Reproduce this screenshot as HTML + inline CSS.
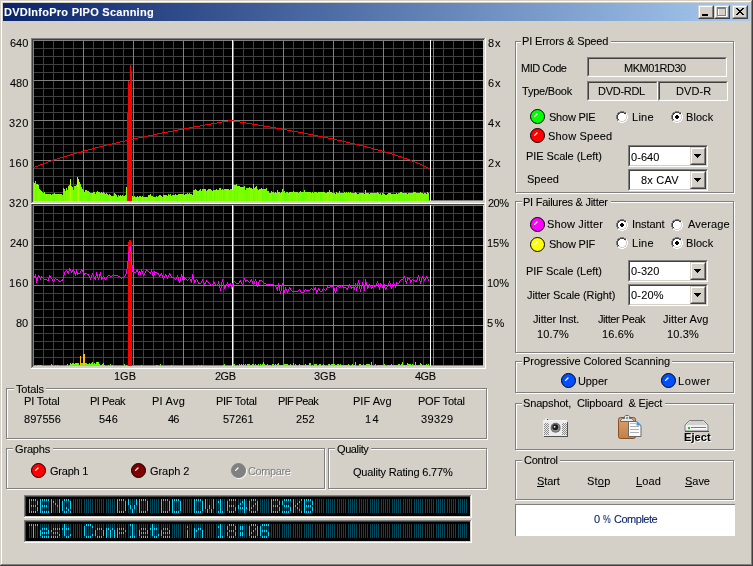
<!DOCTYPE html><html><head><meta charset="utf-8"><style>
html,body{margin:0;padding:0;}
body{width:753px;height:566px;position:relative;overflow:hidden;background:#d4d0c8;font-family:"Liberation Sans",sans-serif;}
.t{position:absolute;white-space:nowrap;will-change:transform;-webkit-text-stroke:0.08px currentColor;font-family:"Liberation Sans",sans-serif;font-size:11px;line-height:13px;}
svg{display:block}
</style></head><body>
<div style="position:absolute;left:0px;top:0px;width:753px;height:566px;background:#d4d0c8;"></div>
<div style="position:absolute;left:1px;top:1px;width:751px;height:1px;background:#fff;"></div>
<div style="position:absolute;left:1px;top:1px;width:1px;height:564px;background:#fff;"></div>
<div style="position:absolute;left:752px;top:0px;width:1px;height:566px;background:#404040;"></div>
<div style="position:absolute;left:0px;top:565px;width:753px;height:1px;background:#404040;"></div>
<div style="position:absolute;left:751px;top:1px;width:1px;height:564px;background:#808080;"></div>
<div style="position:absolute;left:1px;top:564px;width:751px;height:1px;background:#808080;"></div>
<div style="position:absolute;left:3px;top:3px;width:747px;height:18px;background:linear-gradient(to right,#0a246a,#a6caf0)"></div>
<div class="t" style="left:4.00px;top:6.00px;font-weight:bold;font-size:11px;letter-spacing:0.261px;color:#fff;">DVDInfoPro PIPO Scanning</div>
<div style="position:absolute;left:698px;top:5px;width:14px;height:12px;border-style:solid;border-width:1px;border-color:#d4d0c8 #404040 #404040 #d4d0c8;background:#d4d0c8"><div style="position:absolute;left:0;top:0;width:12px;height:10px;border-style:solid;border-width:1px;border-color:#fff #808080 #808080 #fff;"><div style="position:absolute;left:2px;top:7px;width:6px;height:2px;background:#000"></div></div></div>
<div style="position:absolute;left:714px;top:5px;width:14px;height:12px;border-style:solid;border-width:1px;border-color:#d4d0c8 #404040 #404040 #d4d0c8;background:#d4d0c8"><div style="position:absolute;left:0;top:0;width:12px;height:10px;border-style:solid;border-width:1px;border-color:#fff #808080 #808080 #fff;"><svg style="position:absolute;left:1px;top:0px" width="11" height="11" shape-rendering="crispEdges"><path d="M1 1h9v1H1zM1 2h1v8H1zM9 2h1v8H9zM1 9h9v1H1z" fill="#fff"/><path d="M0 0h9v2H0zM0 2h1v7H0zM8 2h1v7H8zM0 8h9v1H0z" fill="#808080"/></svg></div></div>
<div style="position:absolute;left:732px;top:5px;width:14px;height:12px;border-style:solid;border-width:1px;border-color:#d4d0c8 #404040 #404040 #d4d0c8;background:#d4d0c8"><div style="position:absolute;left:0;top:0;width:12px;height:10px;border-style:solid;border-width:1px;border-color:#fff #808080 #808080 #fff;"><svg style="position:absolute;left:2px;top:1px" width="8" height="7" shape-rendering="crispEdges"><path d="M0 0h2v1H0zM6 0h2v1H6zM1 1h2v1H1zM5 1h2v1H5zM2 2h4v1H2zM3 3h2v1H3zM2 4h4v1H2zM1 5h2v1H1zM5 5h2v1H5zM0 6h2v1H0zM6 6h2v1H6z" fill="#000"/></svg></div></div>
<svg style="position:absolute;left:0;top:0" width="753" height="380" shape-rendering="crispEdges"><rect x="31" y="38" width="455" height="166" fill="#d4d0c8"/><rect x="31" y="203" width="455" height="1" fill="#fff"/><rect x="485" y="38" width="1" height="166" fill="#fff"/><rect x="31" y="38" width="454" height="1" fill="#808080"/><rect x="31" y="38" width="1" height="165" fill="#808080"/><rect x="32" y="39" width="452" height="1" fill="#404040"/><rect x="32" y="39" width="1" height="163" fill="#404040"/><rect x="33" y="40" width="450" height="161" fill="#000"/><path d="M43 40h1v161h-1zM53 40h1v161h-1zM63 40h1v161h-1zM73 40h1v161h-1zM93 40h1v161h-1zM103 40h1v161h-1zM113 40h1v161h-1zM123 40h1v161h-1zM143 40h1v161h-1zM153 40h1v161h-1zM163 40h1v161h-1zM173 40h1v161h-1zM193 40h1v161h-1zM203 40h1v161h-1zM213 40h1v161h-1zM223 40h1v161h-1zM243 40h1v161h-1zM253 40h1v161h-1zM263 40h1v161h-1zM273 40h1v161h-1zM293 40h1v161h-1zM303 40h1v161h-1zM313 40h1v161h-1zM323 40h1v161h-1zM343 40h1v161h-1zM353 40h1v161h-1zM363 40h1v161h-1zM373 40h1v161h-1zM393 40h1v161h-1zM403 40h1v161h-1zM413 40h1v161h-1zM423 40h1v161h-1zM443 40h1v161h-1zM453 40h1v161h-1zM463 40h1v161h-1zM473 40h1v161h-1zM33 48h450v1h-450zM33 56h450v1h-450zM33 64h450v1h-450zM33 72h450v1h-450zM33 88h450v1h-450zM33 96h450v1h-450zM33 104h450v1h-450zM33 112h450v1h-450zM33 128h450v1h-450zM33 136h450v1h-450zM33 144h450v1h-450zM33 152h450v1h-450zM33 168h450v1h-450zM33 176h450v1h-450zM33 184h450v1h-450zM33 192h450v1h-450z" fill="#404040"/><path d="M33 40h1v161h-1zM83 40h1v161h-1zM133 40h1v161h-1zM183 40h1v161h-1zM233 40h1v161h-1zM283 40h1v161h-1zM333 40h1v161h-1zM383 40h1v161h-1zM433 40h1v161h-1zM33 40h450v1h-450zM33 80h450v1h-450zM33 120h450v1h-450zM33 160h450v1h-450zM33 200h450v1h-450z" fill="#808080"/><rect x="232" y="40" width="1" height="161" fill="#fff"/><rect x="430" y="40" width="1" height="161" fill="#fff"/><rect x="31" y="204" width="455" height="165" fill="#d4d0c8"/><rect x="31" y="368" width="455" height="1" fill="#fff"/><rect x="485" y="204" width="1" height="165" fill="#fff"/><rect x="31" y="204" width="1" height="164" fill="#808080"/><rect x="32" y="204" width="452" height="1" fill="#404040"/><rect x="32" y="204" width="1" height="163" fill="#404040"/><rect x="33" y="205" width="450" height="161" fill="#000"/><path d="M43 205h1v161h-1zM53 205h1v161h-1zM63 205h1v161h-1zM73 205h1v161h-1zM93 205h1v161h-1zM103 205h1v161h-1zM113 205h1v161h-1zM123 205h1v161h-1zM143 205h1v161h-1zM153 205h1v161h-1zM163 205h1v161h-1zM173 205h1v161h-1zM193 205h1v161h-1zM203 205h1v161h-1zM213 205h1v161h-1zM223 205h1v161h-1zM243 205h1v161h-1zM253 205h1v161h-1zM263 205h1v161h-1zM273 205h1v161h-1zM293 205h1v161h-1zM303 205h1v161h-1zM313 205h1v161h-1zM323 205h1v161h-1zM343 205h1v161h-1zM353 205h1v161h-1zM363 205h1v161h-1zM373 205h1v161h-1zM393 205h1v161h-1zM403 205h1v161h-1zM413 205h1v161h-1zM423 205h1v161h-1zM443 205h1v161h-1zM453 205h1v161h-1zM463 205h1v161h-1zM473 205h1v161h-1zM33 213h450v1h-450zM33 221h450v1h-450zM33 229h450v1h-450zM33 237h450v1h-450zM33 253h450v1h-450zM33 261h450v1h-450zM33 269h450v1h-450zM33 277h450v1h-450zM33 293h450v1h-450zM33 301h450v1h-450zM33 309h450v1h-450zM33 317h450v1h-450zM33 333h450v1h-450zM33 341h450v1h-450zM33 349h450v1h-450zM33 357h450v1h-450z" fill="#404040"/><path d="M33 205h1v161h-1zM83 205h1v161h-1zM133 205h1v161h-1zM183 205h1v161h-1zM233 205h1v161h-1zM283 205h1v161h-1zM333 205h1v161h-1zM383 205h1v161h-1zM433 205h1v161h-1zM33 205h450v1h-450zM33 245h450v1h-450zM33 285h450v1h-450zM33 325h450v1h-450zM33 365h450v1h-450z" fill="#808080"/><rect x="232" y="205" width="1" height="161" fill="#fff"/><rect x="430" y="205" width="1" height="161" fill="#fff"/><path d="M33 182h1v19h-1zM35 181h1v20h-1zM36 184h1v17h-1zM42 192h1v9h-1zM49 194h1v7h-1zM63 188h1v13h-1zM65 191h1v10h-1zM80 184h1v17h-1zM87 191h1v10h-1zM88 191h1v10h-1zM89 192h1v9h-1zM90 193h1v8h-1zM100 193h1v8h-1zM107 194h1v7h-1zM108 195h1v6h-1zM112 196h1v5h-1zM116 195h1v6h-1zM117 197h1v4h-1zM118 195h1v6h-1zM123 196h1v5h-1zM133 197h1v4h-1zM138 197h1v4h-1zM144 197h1v4h-1zM147 197h1v4h-1zM155 197h1v4h-1zM156 196h1v5h-1zM162 197h1v4h-1zM169 195h1v6h-1zM176 195h1v6h-1zM187 193h1v8h-1zM195 189h1v12h-1zM201 191h1v10h-1zM202 189h1v12h-1zM203 189h1v12h-1zM206 191h1v10h-1zM211 190h1v11h-1zM214 190h1v11h-1zM219 188h1v13h-1zM223 190h1v11h-1zM229 190h1v11h-1zM231 189h1v12h-1zM234 185h1v16h-1zM237 186h1v15h-1zM247 188h1v13h-1zM249 187h1v14h-1zM253 184h1v17h-1zM262 189h1v12h-1zM267 191h1v10h-1zM272 192h1v9h-1zM284 191h1v10h-1zM285 193h1v8h-1zM286 192h1v9h-1zM291 192h1v9h-1zM302 192h1v9h-1zM303 192h1v9h-1zM311 193h1v8h-1zM314 192h1v9h-1zM320 192h1v9h-1zM329 190h1v11h-1zM337 193h1v8h-1zM340 193h1v8h-1zM342 193h1v8h-1zM360 193h1v8h-1zM376 193h1v8h-1zM377 192h1v9h-1zM380 193h1v8h-1zM388 193h1v8h-1zM392 194h1v7h-1zM399 193h1v8h-1zM402 193h1v8h-1zM404 193h1v8h-1zM409 193h1v8h-1zM415 192h1v9h-1zM428 193h1v8h-1z" fill="#68ff00"/><path d="M34 183h1v18h-1zM37 184h1v17h-1zM38 185h1v16h-1zM41 191h1v10h-1zM43 193h1v8h-1zM50 194h1v7h-1zM58 194h1v7h-1zM59 194h1v7h-1zM66 188h1v13h-1zM71 186h1v15h-1zM75 186h1v15h-1zM92 193h1v8h-1zM110 195h1v6h-1zM113 196h1v5h-1zM124 196h1v5h-1zM136 197h1v4h-1zM142 196h1v5h-1zM145 197h1v4h-1zM146 197h1v4h-1zM152 196h1v5h-1zM154 197h1v4h-1zM160 195h1v6h-1zM164 195h1v6h-1zM170 194h1v7h-1zM171 196h1v5h-1zM180 194h1v7h-1zM184 195h1v6h-1zM204 189h1v12h-1zM205 189h1v12h-1zM207 190h1v11h-1zM208 189h1v12h-1zM213 190h1v11h-1zM215 190h1v11h-1zM216 189h1v12h-1zM218 190h1v11h-1zM222 189h1v12h-1zM226 189h1v12h-1zM227 189h1v12h-1zM239 186h1v15h-1zM250 188h1v13h-1zM252 189h1v12h-1zM256 186h1v15h-1zM260 189h1v12h-1zM269 193h1v8h-1zM275 192h1v9h-1zM279 192h1v9h-1zM280 193h1v8h-1zM281 192h1v9h-1zM289 192h1v9h-1zM290 192h1v9h-1zM296 192h1v9h-1zM299 192h1v9h-1zM307 192h1v9h-1zM310 192h1v9h-1zM312 192h1v9h-1zM315 192h1v9h-1zM316 192h1v9h-1zM318 192h1v9h-1zM323 192h1v9h-1zM324 192h1v9h-1zM326 193h1v8h-1zM327 192h1v9h-1zM328 192h1v9h-1zM330 192h1v9h-1zM331 192h1v9h-1zM332 193h1v8h-1zM336 192h1v9h-1zM345 193h1v8h-1zM352 193h1v8h-1zM354 193h1v8h-1zM355 192h1v9h-1zM358 194h1v7h-1zM361 193h1v8h-1zM362 193h1v8h-1zM363 193h1v8h-1zM365 190h1v11h-1zM366 193h1v8h-1zM367 193h1v8h-1zM378 193h1v8h-1zM385 195h1v6h-1zM390 193h1v8h-1zM391 194h1v7h-1zM403 193h1v8h-1zM405 193h1v8h-1zM413 192h1v9h-1zM416 193h1v8h-1zM417 193h1v8h-1zM422 193h1v8h-1z" fill="#88ff00"/><path d="M39 189h1v12h-1zM40 190h1v11h-1zM44 192h1v9h-1zM51 195h1v6h-1zM55 194h1v7h-1zM84 192h1v9h-1zM85 190h1v11h-1zM93 192h1v9h-1zM102 193h1v8h-1zM103 192h1v9h-1zM109 194h1v7h-1zM111 196h1v5h-1zM114 193h1v8h-1zM115 194h1v7h-1zM119 196h1v5h-1zM122 195h1v6h-1zM126 187h1v14h-1zM132 196h1v5h-1zM140 196h1v5h-1zM141 197h1v4h-1zM148 195h1v6h-1zM149 195h1v6h-1zM151 196h1v5h-1zM153 197h1v4h-1zM161 196h1v5h-1zM166 195h1v6h-1zM168 194h1v7h-1zM173 195h1v6h-1zM178 194h1v7h-1zM182 194h1v7h-1zM185 194h1v7h-1zM198 191h1v10h-1zM220 188h1v13h-1zM230 189h1v12h-1zM233 184h1v17h-1zM235 185h1v16h-1zM236 184h1v17h-1zM238 186h1v15h-1zM241 187h1v14h-1zM242 187h1v14h-1zM248 188h1v13h-1zM261 188h1v13h-1zM264 189h1v12h-1zM271 191h1v10h-1zM273 192h1v9h-1zM277 190h1v11h-1zM282 189h1v12h-1zM283 192h1v9h-1zM287 192h1v9h-1zM292 192h1v9h-1zM294 192h1v9h-1zM308 192h1v9h-1zM309 192h1v9h-1zM317 193h1v8h-1zM321 192h1v9h-1zM322 192h1v9h-1zM325 193h1v8h-1zM335 194h1v7h-1zM339 191h1v10h-1zM344 192h1v9h-1zM348 192h1v9h-1zM349 193h1v8h-1zM357 194h1v7h-1zM364 194h1v7h-1zM368 193h1v8h-1zM372 193h1v8h-1zM374 193h1v8h-1zM379 194h1v7h-1zM382 193h1v8h-1zM387 194h1v7h-1zM393 194h1v7h-1zM395 194h1v7h-1zM408 193h1v8h-1zM411 193h1v8h-1zM412 193h1v8h-1zM420 192h1v9h-1zM421 193h1v8h-1zM424 193h1v8h-1zM425 193h1v8h-1zM426 194h1v7h-1z" fill="#78ff00"/><path d="M45 194h1v7h-1zM47 194h1v7h-1zM48 194h1v7h-1zM52 194h1v7h-1zM53 194h1v7h-1zM54 193h1v8h-1zM56 194h1v7h-1zM61 194h1v7h-1zM62 195h1v6h-1zM67 190h1v11h-1zM73 190h1v11h-1zM74 186h1v15h-1zM76 185h1v16h-1zM81 187h1v14h-1zM82 189h1v12h-1zM83 190h1v11h-1zM86 190h1v11h-1zM91 193h1v8h-1zM96 192h1v9h-1zM99 192h1v9h-1zM101 192h1v9h-1zM104 193h1v8h-1zM105 194h1v7h-1zM106 193h1v8h-1zM125 195h1v6h-1zM135 197h1v4h-1zM139 196h1v5h-1zM157 197h1v4h-1zM158 196h1v5h-1zM159 195h1v6h-1zM167 196h1v5h-1zM172 195h1v6h-1zM174 195h1v6h-1zM177 195h1v6h-1zM181 194h1v7h-1zM186 194h1v7h-1zM189 193h1v8h-1zM190 194h1v7h-1zM191 194h1v7h-1zM194 190h1v11h-1zM197 191h1v10h-1zM200 189h1v12h-1zM209 189h1v12h-1zM210 189h1v12h-1zM217 190h1v11h-1zM221 190h1v11h-1zM224 189h1v12h-1zM244 186h1v15h-1zM246 188h1v13h-1zM254 188h1v13h-1zM257 189h1v12h-1zM263 189h1v12h-1zM265 189h1v12h-1zM266 188h1v13h-1zM268 191h1v10h-1zM274 193h1v8h-1zM276 193h1v8h-1zM288 193h1v8h-1zM293 191h1v10h-1zM295 192h1v9h-1zM298 193h1v8h-1zM300 191h1v10h-1zM304 190h1v11h-1zM305 192h1v9h-1zM306 192h1v9h-1zM313 193h1v8h-1zM333 193h1v8h-1zM334 193h1v8h-1zM347 193h1v8h-1zM353 193h1v8h-1zM359 193h1v8h-1zM373 193h1v8h-1zM375 193h1v8h-1zM381 195h1v6h-1zM384 194h1v7h-1zM389 193h1v8h-1zM394 194h1v7h-1zM397 194h1v7h-1zM398 193h1v8h-1zM400 192h1v9h-1zM406 193h1v8h-1zM407 194h1v7h-1z" fill="#70ff00"/><path d="M46 194h1v7h-1zM57 194h1v7h-1zM60 194h1v7h-1zM64 189h1v12h-1zM68 186h1v15h-1zM69 185h1v16h-1zM72 187h1v14h-1zM79 182h1v19h-1zM94 192h1v9h-1zM95 194h1v7h-1zM97 191h1v10h-1zM98 192h1v9h-1zM120 195h1v6h-1zM121 196h1v5h-1zM134 196h1v5h-1zM137 196h1v5h-1zM143 197h1v4h-1zM150 194h1v7h-1zM163 195h1v6h-1zM165 195h1v6h-1zM175 194h1v7h-1zM179 194h1v7h-1zM183 194h1v7h-1zM188 194h1v7h-1zM192 195h1v6h-1zM193 190h1v11h-1zM196 190h1v11h-1zM199 190h1v11h-1zM212 191h1v10h-1zM225 189h1v12h-1zM228 189h1v12h-1zM232 190h1v11h-1zM240 187h1v14h-1zM243 187h1v14h-1zM245 190h1v11h-1zM251 188h1v13h-1zM255 187h1v14h-1zM258 190h1v11h-1zM259 189h1v12h-1zM270 193h1v8h-1zM278 192h1v9h-1zM297 192h1v9h-1zM301 192h1v9h-1zM319 192h1v9h-1zM338 193h1v8h-1zM341 193h1v8h-1zM343 193h1v8h-1zM346 192h1v9h-1zM350 192h1v9h-1zM351 193h1v8h-1zM356 193h1v8h-1zM369 194h1v7h-1zM370 193h1v8h-1zM371 193h1v8h-1zM383 194h1v7h-1zM386 195h1v6h-1zM396 193h1v8h-1zM401 192h1v9h-1zM410 193h1v8h-1zM414 192h1v9h-1zM418 193h1v8h-1zM419 193h1v8h-1zM423 194h1v7h-1zM427 192h1v9h-1z" fill="#80ff00"/><path d="M70 179h1v22h-1zM77 177h1v24h-1zM78 179h1v22h-1z" fill="#b8ff00"/><path d="M33 167h1v1h-1zM34 167h1v1h-1zM35 166h1v1h-1zM36 166h1v1h-1zM37 166h1v1h-1zM38 165h1v1h-1zM39 165h1v1h-1zM40 164h1v1h-1zM41 164h1v1h-1zM42 164h1v1h-1zM43 163h1v1h-1zM44 163h1v1h-1zM45 163h1v1h-1zM46 162h1v1h-1zM47 162h1v1h-1zM48 161h1v1h-1zM49 161h1v1h-1zM50 161h1v1h-1zM51 160h1v1h-1zM52 160h1v1h-1zM53 160h1v1h-1zM54 159h1v1h-1zM55 159h1v1h-1zM56 159h1v1h-1zM57 158h1v1h-1zM58 158h1v1h-1zM59 158h1v1h-1zM60 157h1v1h-1zM61 157h1v1h-1zM62 157h1v1h-1zM63 157h1v1h-1zM64 156h1v1h-1zM65 156h1v1h-1zM66 156h1v1h-1zM67 155h1v1h-1zM68 155h1v1h-1zM69 155h1v1h-1zM70 154h1v1h-1zM71 154h1v1h-1zM72 154h1v1h-1zM73 153h1v1h-1zM74 153h1v1h-1zM75 153h1v1h-1zM76 153h1v1h-1zM77 152h1v1h-1zM78 152h1v1h-1zM79 152h1v1h-1zM80 152h1v1h-1zM81 151h1v1h-1zM82 151h1v1h-1zM83 151h1v1h-1zM84 150h1v1h-1zM85 150h1v1h-1zM86 150h1v1h-1zM87 150h1v1h-1zM88 149h1v1h-1zM89 149h1v1h-1zM90 149h1v1h-1zM91 149h1v1h-1zM92 148h1v1h-1zM93 148h1v1h-1zM94 148h1v1h-1zM95 147h1v1h-1zM96 147h1v1h-1zM97 147h1v1h-1zM98 147h1v1h-1zM99 146h1v1h-1zM100 146h1v1h-1zM101 146h1v1h-1zM102 146h1v1h-1zM103 145h1v1h-1zM104 145h1v1h-1zM105 145h1v1h-1zM106 145h1v1h-1zM107 144h1v1h-1zM108 144h1v1h-1zM109 144h1v1h-1zM110 144h1v1h-1zM111 144h1v1h-1zM112 143h1v1h-1zM113 143h1v1h-1zM114 143h1v1h-1zM115 143h1v1h-1zM116 142h1v1h-1zM117 142h1v1h-1zM118 142h1v1h-1zM119 142h1v1h-1zM120 141h1v1h-1zM121 141h1v1h-1zM122 141h1v1h-1zM123 141h1v1h-1zM124 141h1v1h-1zM125 140h1v1h-1zM126 140h1v1h-1zM127 140h1v1h-1zM128 140h1v1h-1zM129 139h1v1h-1zM130 139h1v1h-1zM131 139h1v1h-1zM132 139h1v1h-1zM133 139h1v1h-1zM134 138h1v1h-1zM135 138h1v1h-1zM136 138h1v1h-1zM137 138h1v1h-1zM138 137h1v1h-1zM139 137h1v1h-1zM140 137h1v1h-1zM141 137h1v1h-1zM142 137h1v1h-1zM143 136h1v1h-1zM144 136h1v1h-1zM145 136h1v1h-1zM146 136h1v1h-1zM147 136h1v1h-1zM148 135h1v1h-1zM149 135h1v1h-1zM150 135h1v1h-1zM151 135h1v1h-1zM152 135h1v1h-1zM153 134h1v1h-1zM154 134h1v1h-1zM155 134h1v1h-1zM156 134h1v1h-1zM157 133h1v1h-1zM158 133h1v1h-1zM159 133h1v1h-1zM160 133h1v1h-1zM161 133h1v1h-1zM162 132h1v1h-1zM163 132h1v1h-1zM164 132h1v1h-1zM165 132h1v1h-1zM166 132h1v1h-1zM167 132h1v1h-1zM168 131h1v1h-1zM169 131h1v1h-1zM170 131h1v1h-1zM171 131h1v1h-1zM172 131h1v1h-1zM173 130h1v1h-1zM174 130h1v1h-1zM175 130h1v1h-1zM176 130h1v1h-1zM177 130h1v1h-1zM178 129h1v1h-1zM179 129h1v1h-1zM180 129h1v1h-1zM181 129h1v1h-1zM182 129h1v1h-1zM183 128h1v1h-1zM184 128h1v1h-1zM185 128h1v1h-1zM186 128h1v1h-1zM187 128h1v1h-1zM188 128h1v1h-1zM189 127h1v1h-1zM190 127h1v1h-1zM191 127h1v1h-1zM192 127h1v1h-1zM193 127h1v1h-1zM194 126h1v1h-1zM195 126h1v1h-1zM196 126h1v1h-1zM197 126h1v1h-1zM198 126h1v1h-1zM199 126h1v1h-1zM200 125h1v1h-1zM201 125h1v1h-1zM202 125h1v1h-1zM203 125h1v1h-1zM204 125h1v1h-1zM205 124h1v1h-1zM206 124h1v1h-1zM207 124h1v1h-1zM208 124h1v1h-1zM209 124h1v1h-1zM210 124h1v1h-1zM211 123h1v1h-1zM212 123h1v1h-1zM213 123h1v1h-1zM214 123h1v1h-1zM215 123h1v1h-1zM216 123h1v1h-1zM217 122h1v1h-1zM218 122h1v1h-1zM219 122h1v1h-1zM220 122h1v1h-1zM221 122h1v1h-1zM222 121h1v1h-1zM223 121h1v1h-1zM224 121h1v1h-1zM225 121h1v1h-1zM226 121h1v1h-1zM227 121h1v1h-1zM228 120h1v1h-1zM229 120h1v1h-1zM230 120h1v1h-1zM231 120h1v1h-1zM232 120h1v1h-1zM233 120h1v1h-1zM234 121h1v1h-1zM235 121h1v1h-1zM236 121h1v1h-1zM237 121h1v1h-1zM238 121h1v1h-1zM239 121h1v1h-1zM240 122h1v1h-1zM241 122h1v1h-1zM242 122h1v1h-1zM243 122h1v1h-1zM244 122h1v1h-1zM245 122h1v1h-1zM246 123h1v1h-1zM247 123h1v1h-1zM248 123h1v1h-1zM249 123h1v1h-1zM250 123h1v1h-1zM251 123h1v1h-1zM252 124h1v1h-1zM253 124h1v1h-1zM254 124h1v1h-1zM255 124h1v1h-1zM256 124h1v1h-1zM257 124h1v1h-1zM258 125h1v1h-1zM259 125h1v1h-1zM260 125h1v1h-1zM261 125h1v1h-1zM262 125h1v1h-1zM263 125h1v1h-1zM264 126h1v1h-1zM265 126h1v1h-1zM266 126h1v1h-1zM267 126h1v1h-1zM268 126h1v1h-1zM269 126h1v1h-1zM270 127h1v1h-1zM271 127h1v1h-1zM272 127h1v1h-1zM273 127h1v1h-1zM274 127h1v1h-1zM275 127h1v1h-1zM276 128h1v1h-1zM277 128h1v1h-1zM278 128h1v1h-1zM279 128h1v1h-1zM280 128h1v1h-1zM281 129h1v1h-1zM282 129h1v1h-1zM283 129h1v1h-1zM284 129h1v1h-1zM285 129h1v1h-1zM286 129h1v1h-1zM287 130h1v1h-1zM288 130h1v1h-1zM289 130h1v1h-1zM290 130h1v1h-1zM291 130h1v1h-1zM292 131h1v1h-1zM293 131h1v1h-1zM294 131h1v1h-1zM295 131h1v1h-1zM296 131h1v1h-1zM297 131h1v1h-1zM298 132h1v1h-1zM299 132h1v1h-1zM300 132h1v1h-1zM301 132h1v1h-1zM302 132h1v1h-1zM303 133h1v1h-1zM304 133h1v1h-1zM305 133h1v1h-1zM306 133h1v1h-1zM307 133h1v1h-1zM308 134h1v1h-1zM309 134h1v1h-1zM310 134h1v1h-1zM311 134h1v1h-1zM312 134h1v1h-1zM313 135h1v1h-1zM314 135h1v1h-1zM315 135h1v1h-1zM316 135h1v1h-1zM317 135h1v1h-1zM318 136h1v1h-1zM319 136h1v1h-1zM320 136h1v1h-1zM321 136h1v1h-1zM322 136h1v1h-1zM323 137h1v1h-1zM324 137h1v1h-1zM325 137h1v1h-1zM326 137h1v1h-1zM327 137h1v1h-1zM328 138h1v1h-1zM329 138h1v1h-1zM330 138h1v1h-1zM331 138h1v1h-1zM332 138h1v1h-1zM333 139h1v1h-1zM334 139h1v1h-1zM335 139h1v1h-1zM336 139h1v1h-1zM337 140h1v1h-1zM338 140h1v1h-1zM339 140h1v1h-1zM340 140h1v1h-1zM341 140h1v1h-1zM342 141h1v1h-1zM343 141h1v1h-1zM344 141h1v1h-1zM345 141h1v1h-1zM346 142h1v1h-1zM347 142h1v1h-1zM348 142h1v1h-1zM349 142h1v1h-1zM350 143h1v1h-1zM351 143h1v1h-1zM352 143h1v1h-1zM353 143h1v1h-1zM354 143h1v1h-1zM355 144h1v1h-1zM356 144h1v1h-1zM357 144h1v1h-1zM358 144h1v1h-1zM359 145h1v1h-1zM360 145h1v1h-1zM361 145h1v1h-1zM362 145h1v1h-1zM363 146h1v1h-1zM364 146h1v1h-1zM365 146h1v1h-1zM366 146h1v1h-1zM367 147h1v1h-1zM368 147h1v1h-1zM369 147h1v1h-1zM370 147h1v1h-1zM371 148h1v1h-1zM372 148h1v1h-1zM373 148h1v1h-1zM374 149h1v1h-1zM375 149h1v1h-1zM376 149h1v1h-1zM377 149h1v1h-1zM378 150h1v1h-1zM379 150h1v1h-1zM380 150h1v1h-1zM381 150h1v1h-1zM382 151h1v1h-1zM383 151h1v1h-1zM384 151h1v1h-1zM385 152h1v1h-1zM386 152h1v1h-1zM387 152h1v1h-1zM388 152h1v1h-1zM389 153h1v1h-1zM390 153h1v1h-1zM391 153h1v1h-1zM392 154h1v1h-1zM393 154h1v1h-1zM394 154h1v1h-1zM395 155h1v1h-1zM396 155h1v1h-1zM397 155h1v1h-1zM398 156h1v1h-1zM399 156h1v1h-1zM400 156h1v1h-1zM401 157h1v1h-1zM402 157h1v1h-1zM403 157h1v1h-1zM404 158h1v1h-1zM405 158h1v1h-1zM406 158h1v1h-1zM407 159h1v1h-1zM408 159h1v1h-1zM409 159h1v1h-1zM410 160h1v1h-1zM411 160h1v1h-1zM412 161h1v1h-1zM413 161h1v1h-1zM414 161h1v1h-1zM415 162h1v1h-1zM416 162h1v1h-1zM417 163h1v1h-1zM418 163h1v1h-1zM419 163h1v1h-1zM420 164h1v1h-1zM421 164h1v1h-1zM422 165h1v1h-1zM423 165h1v1h-1zM424 166h1v1h-1zM425 166h1v1h-1zM426 167h1v1h-1zM427 167h1v1h-1zM428 168h1v1h-1z" fill="#ff0000"/><rect x="127" y="113" width="1" height="88" fill="#ff0000"/><rect x="128" y="81" width="1" height="120" fill="#ff0000"/><rect x="129" y="85" width="1" height="116" fill="#ff0000"/><rect x="130" y="65" width="1" height="136" fill="#ff0000"/><rect x="131" y="71" width="1" height="130" fill="#ff0000"/><path d="M35 365h1v1h-1zM37 365h1v1h-1zM38 365h1v1h-1zM39 365h1v1h-1zM40 365h1v1h-1zM41 365h1v1h-1zM51 364h1v2h-1zM52 365h1v1h-1zM55 365h1v1h-1zM57 365h1v1h-1zM67 364h1v2h-1zM69 365h1v1h-1zM70 363h1v3h-1zM71 364h1v2h-1zM72 363h1v3h-1zM73 363h1v3h-1zM74 364h1v2h-1zM75 363h1v3h-1zM76 363h1v3h-1zM77 363h1v3h-1zM78 363h1v3h-1zM79 365h1v1h-1zM80 363h1v3h-1zM81 363h1v3h-1zM82 363h1v3h-1zM83 364h1v2h-1zM84 363h1v3h-1zM85 363h1v3h-1zM86 363h1v3h-1zM87 364h1v2h-1zM88 364h1v2h-1zM89 363h1v3h-1zM90 364h1v2h-1zM91 363h1v3h-1zM92 362h1v4h-1zM93 364h1v2h-1zM94 363h1v3h-1zM95 364h1v2h-1zM96 362h1v4h-1zM97 362h1v4h-1zM98 362h1v4h-1zM99 364h1v2h-1zM100 365h1v1h-1zM101 365h1v1h-1zM102 364h1v2h-1zM103 363h1v3h-1zM104 365h1v1h-1zM108 365h1v1h-1zM110 364h1v2h-1zM112 365h1v1h-1zM124 364h1v2h-1zM126 365h1v1h-1zM130 365h1v1h-1zM141 365h1v1h-1zM156 365h1v1h-1zM157 365h1v1h-1zM160 364h1v2h-1zM171 365h1v1h-1zM198 365h1v1h-1zM201 365h1v1h-1zM223 365h1v1h-1zM224 364h1v2h-1zM233 364h1v2h-1zM234 364h1v2h-1zM237 365h1v1h-1zM239 364h1v2h-1zM240 365h1v1h-1zM241 364h1v2h-1zM242 365h1v1h-1zM243 364h1v2h-1zM244 365h1v1h-1zM245 364h1v2h-1zM247 364h1v2h-1zM248 364h1v2h-1zM249 364h1v2h-1zM250 365h1v1h-1zM251 365h1v1h-1zM252 364h1v2h-1zM253 364h1v2h-1zM254 365h1v1h-1zM255 364h1v2h-1zM256 365h1v1h-1zM257 365h1v1h-1zM258 364h1v2h-1zM260 364h1v2h-1zM261 365h1v1h-1zM262 364h1v2h-1zM263 362h1v4h-1zM264 364h1v2h-1zM265 365h1v1h-1zM266 365h1v1h-1zM267 364h1v2h-1zM268 365h1v1h-1zM269 365h1v1h-1zM270 365h1v1h-1zM272 364h1v2h-1zM273 364h1v2h-1zM274 365h1v1h-1zM275 364h1v2h-1zM276 365h1v1h-1zM277 364h1v2h-1zM278 363h1v3h-1zM279 365h1v1h-1zM280 365h1v1h-1zM281 365h1v1h-1zM282 365h1v1h-1zM283 365h1v1h-1zM284 364h1v2h-1zM285 364h1v2h-1zM286 364h1v2h-1zM287 364h1v2h-1zM288 365h1v1h-1zM289 365h1v1h-1zM290 364h1v2h-1zM291 365h1v1h-1zM292 365h1v1h-1zM293 363h1v3h-1zM294 365h1v1h-1zM295 364h1v2h-1zM296 365h1v1h-1zM298 365h1v1h-1zM299 364h1v2h-1zM300 365h1v1h-1zM301 365h1v1h-1zM302 365h1v1h-1zM303 365h1v1h-1zM304 365h1v1h-1zM305 364h1v2h-1zM306 365h1v1h-1zM307 365h1v1h-1zM308 365h1v1h-1zM309 363h1v3h-1zM310 363h1v3h-1zM312 365h1v1h-1zM314 364h1v2h-1zM315 364h1v2h-1zM316 364h1v2h-1zM318 365h1v1h-1zM319 364h1v2h-1zM320 364h1v2h-1zM322 365h1v1h-1zM323 364h1v2h-1zM324 365h1v1h-1zM326 365h1v1h-1zM328 364h1v2h-1zM329 364h1v2h-1zM330 365h1v1h-1zM331 364h1v2h-1zM332 364h1v2h-1zM333 364h1v2h-1zM334 364h1v2h-1zM335 365h1v1h-1zM336 365h1v1h-1zM337 364h1v2h-1zM338 364h1v2h-1zM339 365h1v1h-1zM340 364h1v2h-1zM341 365h1v1h-1zM342 365h1v1h-1zM343 365h1v1h-1zM344 365h1v1h-1zM345 365h1v1h-1zM346 365h1v1h-1zM347 365h1v1h-1zM348 364h1v2h-1zM349 365h1v1h-1zM351 365h1v1h-1zM352 364h1v2h-1zM353 365h1v1h-1zM354 365h1v1h-1zM355 362h1v4h-1zM359 364h1v2h-1zM360 364h1v2h-1zM361 365h1v1h-1zM362 365h1v1h-1zM363 364h1v2h-1zM364 365h1v1h-1zM365 365h1v1h-1zM366 364h1v2h-1zM367 364h1v2h-1zM368 364h1v2h-1zM369 364h1v2h-1zM370 365h1v1h-1zM371 362h1v4h-1zM372 365h1v1h-1zM374 365h1v1h-1zM375 364h1v2h-1zM377 365h1v1h-1zM378 365h1v1h-1zM379 365h1v1h-1zM380 365h1v1h-1zM381 365h1v1h-1zM382 365h1v1h-1zM383 365h1v1h-1zM384 364h1v2h-1zM385 365h1v1h-1zM387 365h1v1h-1zM388 365h1v1h-1zM389 365h1v1h-1zM390 365h1v1h-1zM391 364h1v2h-1zM392 365h1v1h-1zM393 365h1v1h-1zM394 365h1v1h-1zM395 365h1v1h-1zM396 365h1v1h-1zM397 365h1v1h-1zM398 364h1v2h-1zM399 364h1v2h-1zM400 365h1v1h-1zM401 364h1v2h-1zM402 362h1v4h-1zM403 365h1v1h-1zM404 365h1v1h-1zM405 365h1v1h-1zM406 365h1v1h-1zM407 363h1v3h-1zM408 364h1v2h-1zM409 364h1v2h-1zM410 364h1v2h-1zM411 365h1v1h-1zM412 364h1v2h-1zM413 365h1v1h-1zM414 365h1v1h-1zM415 362h1v4h-1zM416 365h1v1h-1zM417 365h1v1h-1zM418 365h1v1h-1zM419 365h1v1h-1zM420 363h1v3h-1zM421 364h1v2h-1zM422 365h1v1h-1zM423 365h1v1h-1zM424 365h1v1h-1zM425 365h1v1h-1zM426 364h1v2h-1zM427 365h1v1h-1zM428 364h1v2h-1z" fill="#60ff00"/><path d="M80 356h1v10h-1zM83 354h2v12h-2z" fill="#ffc000"/><rect x="128" y="242" width="1" height="124" fill="#ff0000"/><rect x="129" y="240" width="1" height="126" fill="#ff0000"/><rect x="130" y="240" width="1" height="126" fill="#ff0000"/><rect x="131" y="242" width="1" height="124" fill="#ff0000"/><path d="M132 265h1v7h-1zM204 283h1v2h-1zM349 284h1v2h-1zM372 286h1v2h-1zM258 282h1v3h-1zM152 272h1v4h-1zM425 278h1v2h-1zM216 285h1v1h-1zM110 276h1v1h-1zM361 285h1v4h-1zM125 274h1v2h-1zM376 283h1v2h-1zM364 285h1v6h-1zM94 277h1v2h-1zM386 287h1v2h-1zM75 273h1v3h-1zM52 279h1v2h-1zM228 284h1v3h-1zM314 288h1v2h-1zM197 280h1v2h-1zM418 275h1v2h-1zM406 281h1v3h-1zM136 270h1v2h-1zM421 278h1v4h-1zM95 276h1v4h-1zM106 277h1v2h-1zM64 272h1v3h-1zM87 274h1v1h-1zM117 275h1v1h-1zM390 283h1v4h-1zM53 281h1v1h-1zM34 276h1v2h-1zM273 284h1v1h-1zM348 286h1v2h-1zM148 271h1v1h-1zM410 280h1v3h-1zM231 286h1v3h-1zM223 282h1v4h-1zM163 278h1v2h-1zM380 283h1v4h-1zM98 278h1v2h-1zM71 271h1v2h-1zM322 289h1v2h-1zM63 275h1v4h-1zM193 276h1v4h-1zM144 273h1v2h-1zM280 291h1v3h-1zM417 277h1v3h-1zM428 279h1v2h-1zM91 275h1v3h-1zM83 272h1v1h-1zM311 288h1v1h-1zM367 286h1v3h-1zM359 283h1v6h-1zM325 290h1v1h-1zM178 277h1v4h-1zM201 281h1v2h-1zM72 270h1v2h-1zM159 275h1v2h-1zM398 283h1v1h-1zM379 287h1v3h-1zM109 275h1v1h-1zM37 277h1v4h-1zM329 287h1v1h-1zM246 280h1v1h-1zM151 269h1v3h-1zM298 290h1v1h-1zM162 275h1v3h-1zM196 279h1v1h-1zM90 278h1v2h-1zM101 276h1v4h-1zM363 284h1v4h-1zM40 278h1v2h-1zM257 285h1v2h-1zM174 278h1v1h-1zM185 278h1v1h-1zM409 278h1v2h-1zM375 285h1v2h-1zM128 252h1v9h-1zM302 292h1v1h-1zM219 284h1v4h-1zM317 290h1v2h-1zM222 279h1v3h-1zM192 274h1v5h-1zM129 247h1v5h-1zM356 287h1v4h-1zM97 274h1v4h-1zM337 285h1v2h-1zM78 273h1v1h-1zM371 287h1v2h-1zM181 274h1v3h-1zM279 286h1v5h-1zM82 270h1v2h-1zM385 288h1v2h-1zM355 283h1v4h-1zM394 284h1v2h-1zM135 272h1v1h-1zM158 273h1v2h-1zM127 261h1v8h-1zM93 275h1v2h-1zM378 283h1v4h-1zM44 279h1v1h-1zM336 287h1v4h-1zM170 274h1v2h-1zM211 285h1v1h-1zM203 281h1v2h-1zM184 277h1v3h-1zM89 276h1v2h-1zM340 286h1v1h-1zM36 278h1v5h-1zM47 280h1v1h-1zM256 281h1v4h-1zM154 271h1v4h-1zM405 278h1v4h-1zM416 280h1v2h-1zM229 284h1v2h-1zM112 275h1v1h-1zM268 284h1v1h-1zM260 280h1v1h-1zM218 281h1v3h-1zM124 276h1v1h-1zM188 279h1v1h-1zM230 283h1v3h-1zM283 286h1v4h-1zM169 273h1v2h-1zM420 281h1v3h-1zM401 279h1v1h-1zM412 279h1v1h-1zM67 271h1v2h-1zM153 275h1v4h-1zM351 287h1v2h-1zM413 280h1v1h-1zM424 279h1v2h-1zM309 290h1v1h-1zM237 283h1v1h-1zM115 275h1v1h-1zM321 291h1v1h-1zM143 274h1v2h-1zM419 277h1v4h-1zM199 283h1v1h-1zM180 277h1v4h-1zM191 279h1v4h-1zM389 281h1v2h-1zM294 291h1v1h-1zM233 280h1v3h-1zM161 273h1v2h-1zM225 286h1v2h-1zM370 285h1v2h-1zM100 272h1v4h-1zM362 282h1v3h-1zM59 281h1v1h-1zM131 252h1v13h-1zM343 287h1v1h-1zM195 280h1v2h-1zM206 280h1v2h-1zM382 285h1v3h-1zM176 277h1v2h-1zM179 281h1v2h-1zM332 286h1v1h-1zM290 288h1v2h-1zM282 283h1v3h-1zM366 282h1v4h-1zM66 270h1v1h-1zM358 280h1v3h-1zM347 288h1v2h-1zM350 285h1v2h-1zM316 290h1v4h-1zM423 277h1v2h-1zM393 282h1v2h-1zM55 278h1v1h-1zM92 273h1v2h-1zM58 280h1v1h-1zM278 283h1v4h-1zM165 274h1v2h-1zM281 286h1v5h-1zM396 282h1v3h-1zM354 287h1v3h-1zM274 285h1v1h-1zM168 275h1v2h-1zM126 269h1v5h-1zM138 272h1v3h-1zM149 272h1v1h-1zM96 272h1v4h-1zM369 284h1v2h-1zM335 291h1v2h-1zM35 274h1v4h-1zM275 286h1v1h-1zM327 286h1v2h-1zM150 272h1v2h-1zM119 276h1v1h-1zM381 284h1v2h-1zM384 284h1v4h-1zM395 285h1v3h-1zM61 280h1v1h-1zM289 287h1v2h-1zM312 289h1v1h-1zM251 279h1v2h-1zM407 277h1v4h-1zM104 277h1v2h-1zM122 277h1v1h-1zM365 279h1v6h-1zM388 283h1v2h-1zM271 284h1v1h-1zM357 283h1v5h-1zM304 290h1v2h-1zM221 282h1v6h-1zM232 283h1v4h-1zM243 280h1v4h-1zM224 286h1v3h-1zM88 274h1v2h-1zM99 274h1v4h-1zM142 271h1v3h-1zM411 280h1v2h-1zM277 287h1v4h-1zM403 277h1v2h-1zM217 284h1v2h-1zM77 272h1v3h-1zM111 276h1v1h-1zM175 279h1v1h-1zM69 268h1v3h-1zM392 284h1v3h-1zM334 288h1v3h-1zM187 280h1v1h-1zM239 281h1v2h-1zM137 269h1v3h-1zM84 273h1v2h-1zM130 246h1v6h-1zM255 279h1v2h-1zM307 290h1v1h-1zM422 276h1v2h-1zM213 281h1v3h-1zM171 276h1v2h-1zM182 276h1v4h-1zM68 271h1v3h-1zM244 278h1v2h-1zM285 287h1v3h-1zM297 291h1v1h-1zM186 279h1v1h-1zM373 285h1v1h-1zM220 288h1v3h-1zM315 287h1v3h-1zM160 274h1v2h-1zM288 289h1v2h-1zM205 282h1v2h-1zM76 269h1v4h-1zM300 290h1v2h-1zM183 280h1v3h-1zM194 280h1v3h-1zM250 280h1v2h-1zM133 272h1v1h-1zM164 276h1v2h-1zM303 292h1v1h-1zM103 276h1v1h-1zM323 288h1v1h-1zM338 286h1v1h-1zM368 286h1v2h-1zM190 279h1v2h-1zM254 281h1v3h-1zM265 283h1v1h-1zM402 279h1v1h-1zM391 287h1v2h-1zM383 282h1v3h-1zM360 289h1v3h-1zM49 275h1v3h-1zM266 284h1v1h-1zM352 287h1v1h-1zM247 280h1v1h-1zM141 269h1v3h-1zM227 282h1v2h-1zM326 288h1v2h-1zM284 290h1v3h-1zM387 285h1v2h-1zM65 271h1v1h-1zM140 272h1v3h-1zM79 273h1v1h-1zM235 282h1v1h-1zM269 284h1v1h-1zM333 286h1v2h-1zM291 290h1v1h-1zM292 291h1v1h-1zM33 278h1v1h-1zM114 275h1v1h-1zM167 277h1v2h-1zM189 278h1v1h-1zM45 279h1v1h-1zM56 279h1v1h-1zM212 284h1v2h-1zM276 287h1v2h-1zM330 286h1v1h-1zM48 278h1v3h-1zM299 289h1v1h-1zM310 289h1v1h-1zM155 272h1v1h-1zM102 277h1v2h-1zM60 281h1v1h-1zM41 276h1v2h-1zM344 287h1v1h-1zM261 280h1v1h-1zM295 291h1v1h-1zM242 284h1v2h-1zM253 284h1v2h-1zM234 281h1v1h-1zM139 271h1v2h-1zM120 277h1v1h-1zM318 288h1v2h-1zM287 291h1v2h-1zM121 278h1v1h-1zM113 274h1v1h-1zM208 282h1v1h-1zM238 283h1v1h-1zM166 275h1v2h-1zM177 275h1v2h-1zM116 275h1v1h-1zM200 283h1v1h-1zM245 280h1v2h-1zM313 290h1v1h-1zM207 281h1v1h-1zM241 282h1v2h-1zM105 279h1v1h-1zM74 271h1v3h-1zM85 273h1v1h-1zM108 275h1v1h-1zM286 289h1v2h-1zM172 277h1v1h-1zM215 284h1v1h-1zM248 281h1v1h-1zM146 269h1v2h-1zM123 277h1v1h-1zM374 286h1v1h-1zM249 282h1v1h-1zM272 284h1v1h-1zM400 280h1v1h-1zM147 270h1v1h-1zM252 281h1v3h-1zM404 276h1v2h-1zM70 269h1v2h-1zM306 290h1v1h-1zM328 287h1v1h-1zM339 287h1v1h-1zM214 282h1v2h-1zM226 284h1v2h-1zM397 283h1v1h-1zM62 279h1v2h-1zM324 289h1v1h-1zM377 281h1v2h-1zM86 273h1v1h-1zM173 277h1v1h-1zM301 292h1v1h-1zM81 269h1v2h-1zM427 277h1v2h-1zM54 279h1v2h-1zM305 289h1v1h-1zM240 280h1v2h-1zM308 290h1v1h-1zM319 289h1v2h-1zM236 283h1v1h-1zM134 272h1v1h-1zM264 283h1v1h-1zM320 291h1v1h-1zM259 280h1v2h-1zM415 281h1v1h-1zM198 282h1v2h-1zM73 269h1v2h-1zM39 276h1v2h-1zM293 291h1v1h-1zM408 278h1v1h-1zM210 284h1v1h-1zM51 278h1v1h-1zM267 284h1v1h-1zM426 276h1v2h-1zM331 286h1v1h-1zM145 271h1v2h-1zM156 272h1v1h-1zM262 281h1v1h-1zM263 282h1v1h-1zM157 273h1v1h-1zM399 281h1v2h-1zM43 278h1v1h-1zM414 280h1v1h-1zM38 275h1v2h-1zM202 279h1v2h-1zM80 271h1v2h-1zM50 276h1v2h-1zM353 286h1v2h-1zM107 276h1v1h-1zM118 276h1v1h-1zM42 277h1v1h-1zM270 284h1v1h-1zM345 287h1v1h-1zM209 283h1v1h-1zM346 288h1v1h-1zM46 279h1v1h-1zM57 279h1v1h-1zM341 285h1v1h-1zM342 286h1v1h-1zM296 291h1v1h-1z" fill="#ff00ff"/></svg>
<div class="t" style="left:10.30px;top:37.00px;font-weight:normal;font-size:11px;letter-spacing:0.000px;color:#000;">640</div>
<div class="t" style="left:10.30px;top:77.00px;font-weight:normal;font-size:11px;letter-spacing:0.000px;color:#000;">480</div>
<div class="t" style="left:9.30px;top:117.00px;font-weight:normal;font-size:11px;letter-spacing:0.500px;color:#000;">320</div>
<div class="t" style="left:9.30px;top:157.00px;font-weight:normal;font-size:11px;letter-spacing:0.500px;color:#000;">160</div>
<div class="t" style="left:9.30px;top:197.00px;font-weight:normal;font-size:11px;letter-spacing:0.500px;color:#000;">320</div>
<div class="t" style="left:10.30px;top:237.00px;font-weight:normal;font-size:11px;letter-spacing:0.000px;color:#000;">240</div>
<div class="t" style="left:9.30px;top:277.00px;font-weight:normal;font-size:11px;letter-spacing:0.500px;color:#000;">160</div>
<div class="t" style="left:16.40px;top:317.00px;font-weight:normal;font-size:11px;letter-spacing:0.000px;color:#000;">80</div>
<div class="t" style="left:488.00px;top:37.00px;font-weight:normal;font-size:11px;letter-spacing:1.000px;color:#000;">8x</div>
<div class="t" style="left:488.00px;top:77.00px;font-weight:normal;font-size:11px;letter-spacing:1.000px;color:#000;">6x</div>
<div class="t" style="left:488.00px;top:117.00px;font-weight:normal;font-size:11px;letter-spacing:1.000px;color:#000;">4x</div>
<div class="t" style="left:488.00px;top:157.00px;font-weight:normal;font-size:11px;letter-spacing:1.000px;color:#000;">2x</div>
<div class="t" style="left:488.00px;top:197.00px;font-weight:normal;font-size:11px;letter-spacing:-0.500px;color:#000;">20%</div>
<div class="t" style="left:487.00px;top:237.00px;font-weight:normal;font-size:11px;letter-spacing:0.000px;color:#000;">15%</div>
<div class="t" style="left:487.00px;top:277.00px;font-weight:normal;font-size:11px;letter-spacing:0.000px;color:#000;">10%</div>
<div class="t" style="left:487.00px;top:317.00px;font-weight:normal;font-size:11px;letter-spacing:1.500px;color:#000;">5%</div>
<div class="t" style="left:113.50px;top:370.00px;font-weight:normal;font-size:11px;letter-spacing:0.000px;color:#000;">1GB</div>
<div class="t" style="left:214.50px;top:370.00px;font-weight:normal;font-size:11px;letter-spacing:-0.500px;color:#000;">2GB</div>
<div class="t" style="left:313.50px;top:370.00px;font-weight:normal;font-size:11px;letter-spacing:0.000px;color:#000;">3GB</div>
<div class="t" style="left:414.50px;top:370.00px;font-weight:normal;font-size:11px;letter-spacing:-0.500px;color:#000;">4GB</div>
<div style="position:absolute;left:7px;top:389px;width:479px;height:49px;border:1px solid #fff;"></div>
<div style="position:absolute;left:6px;top:388px;width:479px;height:49px;border:1px solid #808080;"></div>
<div style="position:absolute;left:13.5px;top:387px;width:32.2px;height:4px;background:#d4d0c8;"></div>
<div class="t" style="left:15.50px;top:383.00px;font-weight:normal;font-size:11px;letter-spacing:-0.160px;color:#000;">Totals</div>
<div class="t" style="left:24.30px;top:395.00px;font-weight:normal;font-size:11px;letter-spacing:-0.129px;color:#000;">PI Total</div>
<div class="t" style="left:90.30px;top:395.00px;font-weight:normal;font-size:11px;letter-spacing:-0.483px;color:#000;">PI Peak</div>
<div class="t" style="left:152.40px;top:395.00px;font-weight:normal;font-size:11px;letter-spacing:0.260px;color:#000;">PI Avg</div>
<div class="t" style="left:215.70px;top:395.00px;font-weight:normal;font-size:11px;letter-spacing:-0.275px;color:#000;">PIF Total</div>
<div class="t" style="left:277.80px;top:395.00px;font-weight:normal;font-size:11px;letter-spacing:-0.643px;color:#000;">PIF Peak</div>
<div class="t" style="left:353.30px;top:395.00px;font-weight:normal;font-size:11px;letter-spacing:0.033px;color:#000;">PIF Avg</div>
<div class="t" style="left:417.70px;top:395.00px;font-weight:normal;font-size:11px;letter-spacing:-0.213px;color:#000;">POF Total</div>
<div class="t" style="left:24.30px;top:413.00px;font-weight:normal;font-size:11px;letter-spacing:0.020px;color:#000;">897556</div>
<div class="t" style="left:98.90px;top:413.00px;font-weight:normal;font-size:11px;letter-spacing:0.250px;color:#000;">546</div>
<div class="t" style="left:167.80px;top:413.00px;font-weight:normal;font-size:11px;letter-spacing:-0.900px;color:#000;">46</div>
<div class="t" style="left:223.20px;top:413.00px;font-weight:normal;font-size:11px;letter-spacing:0.000px;color:#000;">57261</div>
<div class="t" style="left:296.00px;top:413.00px;font-weight:normal;font-size:11px;letter-spacing:0.100px;color:#000;">252</div>
<div class="t" style="left:364.50px;top:413.00px;font-weight:normal;font-size:11px;letter-spacing:1.300px;color:#000;">14</div>
<div class="t" style="left:421.40px;top:413.00px;font-weight:normal;font-size:11px;letter-spacing:0.375px;color:#000;">39329</div>
<div style="position:absolute;left:7px;top:449px;width:317px;height:39px;border:1px solid #fff;"></div>
<div style="position:absolute;left:6px;top:448px;width:317px;height:39px;border:1px solid #808080;"></div>
<div style="position:absolute;left:12.8px;top:447px;width:40.2px;height:4px;background:#d4d0c8;"></div>
<div class="t" style="left:14.80px;top:443.00px;font-weight:normal;font-size:11px;letter-spacing:-0.160px;color:#000;">Graphs</div>
<svg style="position:absolute;left:31px;top:463px" width="17" height="17" viewBox="0 0 17 17"><circle cx="7.5" cy="7.5" r="7" fill="#ff0000" stroke="#000" stroke-width="1"/><path d="M4.6 7.4 L7 5" stroke="#fff" stroke-width="1.3" stroke-linecap="round"/></svg>
<div class="t" style="left:49.50px;top:465.00px;font-weight:normal;font-size:11px;letter-spacing:-0.233px;color:#000;">Graph 1</div>
<svg style="position:absolute;left:131px;top:463px" width="17" height="17" viewBox="0 0 17 17"><circle cx="7.5" cy="7.5" r="7" fill="#800000" stroke="#000" stroke-width="1"/><path d="M4.6 7.4 L7 5" stroke="#fff" stroke-width="1.3" stroke-linecap="round"/></svg>
<div class="t" style="left:149.90px;top:465.00px;font-weight:normal;font-size:11px;letter-spacing:-0.050px;color:#000;">Graph 2</div>
<svg style="position:absolute;left:231px;top:463px" width="17" height="17" viewBox="0 0 17 17"><circle cx="8.5" cy="8.5" r="7" fill="none" stroke="#fff" stroke-width="1"/><circle cx="7.5" cy="7.5" r="7" fill="#808080" stroke="#808080" stroke-width="1"/><path d="M4.6 7.4 L7 5" stroke="#fff" stroke-width="1.3" stroke-linecap="round"/></svg>
<div class="t" style="left:247.90px;top:465.00px;font-weight:normal;font-size:11px;letter-spacing:-0.400px;color:#808080;text-shadow:1px 1px 0 #fff">Compare</div>
<div style="position:absolute;left:329px;top:449px;width:157px;height:39px;border:1px solid #fff;"></div>
<div style="position:absolute;left:328px;top:448px;width:157px;height:39px;border:1px solid #808080;"></div>
<div style="position:absolute;left:334.9px;top:447px;width:36.6px;height:4px;background:#d4d0c8;"></div>
<div class="t" style="left:336.90px;top:443.00px;font-weight:normal;font-size:11px;letter-spacing:-0.400px;color:#000;">Quality</div>
<div class="t" style="left:352.70px;top:466.00px;font-weight:normal;font-size:11px;letter-spacing:-0.189px;color:#000;">Quality Rating 6.77%</div>
<svg style="position:absolute;left:0;top:0" width="753" height="566" shape-rendering="crispEdges"><rect x="24" y="495" width="448" height="23" fill="#fff"/><rect x="24" y="495" width="447" height="22" fill="#808080"/><rect x="25" y="496" width="446" height="21" fill="#d4d0c8"/><rect x="25" y="496" width="445" height="20" fill="#404040"/><rect x="26" y="497" width="444" height="19" fill="#000"/><rect x="24" y="520" width="448" height="23" fill="#fff"/><rect x="24" y="520" width="447" height="22" fill="#808080"/><rect x="25" y="521" width="446" height="21" fill="#d4d0c8"/><rect x="25" y="521" width="445" height="20" fill="#404040"/><rect x="26" y="522" width="444" height="19" fill="#000"/><path d="M31 501h1v4h-1zM31 507h1v4h-1zM33 501h1v4h-1zM33 507h1v4h-1zM35 501h1v4h-1zM35 507h1v4h-1zM37 499h1v2h-1zM37 505h1v2h-1zM37 511h1v2h-1zM42 501h1v4h-1zM42 507h1v4h-1zM44 501h1v4h-1zM44 507h1v4h-1zM46 501h1v4h-1zM46 507h1v4h-1zM48 501h1v10h-1zM53 499h1v2h-1zM53 503h1v10h-1zM55 499h1v4h-1zM55 505h1v8h-1zM57 499h1v6h-1zM57 507h1v6h-1zM62 499h1v2h-1zM62 511h1v2h-1zM64 501h1v10h-1zM66 501h1v6h-1zM66 509h1v2h-1zM68 501h1v8h-1zM68 511h1v2h-1zM70 499h1v2h-1zM70 509h1v2h-1zM73 499h1v14h-1zM75 499h1v14h-1zM77 499h1v14h-1zM79 499h1v14h-1zM81 499h1v14h-1zM84 499h1v14h-1zM86 499h1v14h-1zM88 499h1v14h-1zM90 499h1v14h-1zM92 499h1v14h-1zM95 499h1v14h-1zM97 499h1v14h-1zM99 499h1v14h-1zM101 499h1v14h-1zM103 499h1v14h-1zM106 499h1v14h-1zM108 499h1v14h-1zM110 499h1v14h-1zM112 499h1v14h-1zM114 499h1v14h-1zM119 501h1v10h-1zM121 501h1v10h-1zM123 501h1v10h-1zM125 499h1v2h-1zM125 511h1v2h-1zM128 505h1v8h-1zM130 499h1v6h-1zM130 509h1v4h-1zM132 499h1v10h-1zM134 499h1v6h-1zM134 509h1v4h-1zM136 505h1v8h-1zM141 501h1v10h-1zM143 501h1v10h-1zM145 501h1v10h-1zM147 499h1v2h-1zM147 511h1v2h-1zM150 499h1v14h-1zM152 499h1v14h-1zM154 499h1v14h-1zM156 499h1v14h-1zM158 499h1v14h-1zM163 501h1v10h-1zM165 501h1v10h-1zM167 501h1v10h-1zM169 499h1v2h-1zM169 511h1v2h-1zM174 501h1v10h-1zM176 501h1v10h-1zM178 501h1v10h-1zM180 499h1v2h-1zM180 511h1v2h-1zM183 499h1v14h-1zM185 499h1v14h-1zM187 499h1v14h-1zM189 499h1v14h-1zM191 499h1v14h-1zM196 501h1v10h-1zM198 501h1v10h-1zM200 501h1v10h-1zM202 499h1v2h-1zM202 511h1v2h-1zM205 509h1v4h-1zM207 499h1v10h-1zM209 499h1v6h-1zM209 509h1v4h-1zM211 499h1v10h-1zM213 509h1v4h-1zM216 499h1v14h-1zM218 499h1v2h-1zM218 503h1v8h-1zM222 499h1v12h-1zM224 499h1v14h-1zM227 499h1v2h-1zM227 511h1v2h-1zM229 501h1v4h-1zM229 507h1v4h-1zM231 501h1v4h-1zM231 507h1v4h-1zM233 501h1v4h-1zM233 507h1v4h-1zM235 501h1v6h-1zM235 511h1v2h-1zM238 499h1v6h-1zM238 509h1v4h-1zM240 499h1v4h-1zM240 505h1v2h-1zM240 509h1v4h-1zM242 499h1v2h-1zM242 503h1v4h-1zM242 509h1v4h-1zM246 499h1v8h-1zM246 509h1v4h-1zM249 499h1v2h-1zM249 511h1v2h-1zM251 501h1v6h-1zM251 509h1v2h-1zM253 501h1v4h-1zM253 507h1v4h-1zM255 501h1v2h-1zM255 505h1v6h-1zM257 499h1v2h-1zM257 511h1v2h-1zM260 499h1v14h-1zM262 499h1v14h-1zM264 499h1v14h-1zM266 499h1v14h-1zM268 499h1v14h-1zM273 501h1v4h-1zM273 507h1v4h-1zM275 501h1v4h-1zM275 507h1v4h-1zM277 501h1v4h-1zM277 507h1v4h-1zM279 499h1v2h-1zM279 505h1v2h-1zM279 511h1v2h-1zM282 499h1v2h-1zM282 505h1v6h-1zM284 501h1v4h-1zM284 507h1v4h-1zM286 501h1v4h-1zM286 507h1v4h-1zM288 501h1v4h-1zM288 507h1v4h-1zM290 501h1v6h-1zM290 511h1v2h-1zM295 499h1v6h-1zM295 507h1v6h-1zM297 499h1v4h-1zM297 505h1v2h-1zM297 509h1v4h-1zM299 499h1v2h-1zM299 503h1v6h-1zM299 511h1v2h-1zM301 501h1v10h-1zM306 501h1v4h-1zM306 507h1v4h-1zM308 501h1v4h-1zM308 507h1v4h-1zM310 501h1v4h-1zM310 507h1v4h-1zM312 499h1v2h-1zM312 505h1v2h-1zM312 511h1v2h-1zM315 499h1v14h-1zM317 499h1v14h-1zM319 499h1v14h-1zM321 499h1v14h-1zM323 499h1v14h-1zM326 499h1v14h-1zM328 499h1v14h-1zM330 499h1v14h-1zM332 499h1v14h-1zM334 499h1v14h-1zM337 499h1v14h-1zM339 499h1v14h-1zM341 499h1v14h-1zM343 499h1v14h-1zM345 499h1v14h-1zM348 499h1v14h-1zM350 499h1v14h-1zM352 499h1v14h-1zM354 499h1v14h-1zM356 499h1v14h-1zM359 499h1v14h-1zM361 499h1v14h-1zM363 499h1v14h-1zM365 499h1v14h-1zM367 499h1v14h-1zM370 499h1v14h-1zM372 499h1v14h-1zM374 499h1v14h-1zM376 499h1v14h-1zM378 499h1v14h-1zM381 499h1v14h-1zM383 499h1v14h-1zM385 499h1v14h-1zM387 499h1v14h-1zM389 499h1v14h-1zM392 499h1v14h-1zM394 499h1v14h-1zM396 499h1v14h-1zM398 499h1v14h-1zM400 499h1v14h-1zM403 499h1v14h-1zM405 499h1v14h-1zM407 499h1v14h-1zM409 499h1v14h-1zM411 499h1v14h-1zM414 499h1v14h-1zM416 499h1v14h-1zM418 499h1v14h-1zM420 499h1v14h-1zM422 499h1v14h-1zM425 499h1v14h-1zM427 499h1v14h-1zM429 499h1v14h-1zM431 499h1v14h-1zM433 499h1v14h-1zM436 499h1v14h-1zM438 499h1v14h-1zM440 499h1v14h-1zM442 499h1v14h-1zM444 499h1v14h-1zM447 499h1v14h-1zM449 499h1v14h-1zM451 499h1v14h-1zM453 499h1v14h-1zM455 499h1v14h-1zM458 499h1v14h-1zM460 499h1v14h-1zM462 499h1v14h-1zM464 499h1v14h-1zM466 499h1v14h-1z" fill="#004a5c"/><path d="M29 499h1v14h-1zM31 499h1v2h-1zM31 505h1v2h-1zM31 511h1v2h-1zM33 499h1v2h-1zM33 505h1v2h-1zM33 511h1v2h-1zM35 499h1v2h-1zM35 505h1v2h-1zM35 511h1v2h-1zM37 501h1v4h-1zM37 507h1v4h-1zM40 499h1v14h-1zM42 499h1v2h-1zM42 505h1v2h-1zM42 511h1v2h-1zM44 499h1v2h-1zM44 505h1v2h-1zM44 511h1v2h-1zM46 499h1v2h-1zM46 505h1v2h-1zM46 511h1v2h-1zM48 499h1v2h-1zM48 511h1v2h-1zM51 499h1v14h-1zM53 501h1v2h-1zM55 503h1v2h-1zM57 505h1v2h-1zM59 499h1v14h-1zM62 501h1v10h-1zM64 499h1v2h-1zM64 511h1v2h-1zM66 499h1v2h-1zM66 507h1v2h-1zM66 511h1v2h-1zM68 499h1v2h-1zM68 509h1v2h-1zM70 501h1v8h-1zM70 511h1v2h-1zM117 499h1v14h-1zM119 499h1v2h-1zM119 511h1v2h-1zM121 499h1v2h-1zM121 511h1v2h-1zM123 499h1v2h-1zM123 511h1v2h-1zM125 501h1v10h-1zM128 499h1v6h-1zM130 505h1v4h-1zM132 509h1v4h-1zM134 505h1v4h-1zM136 499h1v6h-1zM139 499h1v14h-1zM141 499h1v2h-1zM141 511h1v2h-1zM143 499h1v2h-1zM143 511h1v2h-1zM145 499h1v2h-1zM145 511h1v2h-1zM147 501h1v10h-1zM161 499h1v14h-1zM163 499h1v2h-1zM163 511h1v2h-1zM165 499h1v2h-1zM165 511h1v2h-1zM167 499h1v2h-1zM167 511h1v2h-1zM169 501h1v10h-1zM172 499h1v14h-1zM174 499h1v2h-1zM174 511h1v2h-1zM176 499h1v2h-1zM176 511h1v2h-1zM178 499h1v2h-1zM178 511h1v2h-1zM180 501h1v10h-1zM194 499h1v14h-1zM196 499h1v2h-1zM196 511h1v2h-1zM198 499h1v2h-1zM198 511h1v2h-1zM200 499h1v2h-1zM200 511h1v2h-1zM202 501h1v10h-1zM205 499h1v10h-1zM207 509h1v4h-1zM209 505h1v4h-1zM211 509h1v4h-1zM213 499h1v10h-1zM218 501h1v2h-1zM218 511h1v2h-1zM220 499h1v14h-1zM222 511h1v2h-1zM227 501h1v10h-1zM229 499h1v2h-1zM229 505h1v2h-1zM229 511h1v2h-1zM231 499h1v2h-1zM231 505h1v2h-1zM231 511h1v2h-1zM233 499h1v2h-1zM233 505h1v2h-1zM233 511h1v2h-1zM235 499h1v2h-1zM235 507h1v4h-1zM238 505h1v4h-1zM240 503h1v2h-1zM240 507h1v2h-1zM242 501h1v2h-1zM242 507h1v2h-1zM244 499h1v14h-1zM246 507h1v2h-1zM249 501h1v10h-1zM251 499h1v2h-1zM251 507h1v2h-1zM251 511h1v2h-1zM253 499h1v2h-1zM253 505h1v2h-1zM253 511h1v2h-1zM255 499h1v2h-1zM255 503h1v2h-1zM255 511h1v2h-1zM257 501h1v10h-1zM271 499h1v14h-1zM273 499h1v2h-1zM273 505h1v2h-1zM273 511h1v2h-1zM275 499h1v2h-1zM275 505h1v2h-1zM275 511h1v2h-1zM277 499h1v2h-1zM277 505h1v2h-1zM277 511h1v2h-1zM279 501h1v4h-1zM279 507h1v4h-1zM282 501h1v4h-1zM282 511h1v2h-1zM284 499h1v2h-1zM284 505h1v2h-1zM284 511h1v2h-1zM286 499h1v2h-1zM286 505h1v2h-1zM286 511h1v2h-1zM288 499h1v2h-1zM288 505h1v2h-1zM288 511h1v2h-1zM290 499h1v2h-1zM290 507h1v4h-1zM293 499h1v14h-1zM295 505h1v2h-1zM297 503h1v2h-1zM297 507h1v2h-1zM299 501h1v2h-1zM299 509h1v2h-1zM301 499h1v2h-1zM301 511h1v2h-1zM304 499h1v14h-1zM306 499h1v2h-1zM306 505h1v2h-1zM306 511h1v2h-1zM308 499h1v2h-1zM308 505h1v2h-1zM308 511h1v2h-1zM310 499h1v2h-1zM310 505h1v2h-1zM310 511h1v2h-1zM312 501h1v4h-1zM312 507h1v4h-1z" fill="#00dcff"/><path d="M29 526h1v12h-1zM31 526h1v12h-1zM35 526h1v12h-1zM37 526h1v12h-1zM40 524h1v6h-1zM40 536h1v2h-1zM42 524h1v4h-1zM42 530h1v2h-1zM42 534h1v2h-1zM44 524h1v4h-1zM44 530h1v2h-1zM44 534h1v2h-1zM46 524h1v4h-1zM46 530h1v2h-1zM46 534h1v2h-1zM48 524h1v6h-1zM48 534h1v2h-1zM51 524h1v6h-1zM51 532h1v4h-1zM53 524h1v4h-1zM53 530h1v2h-1zM53 534h1v2h-1zM55 524h1v4h-1zM55 530h1v2h-1zM55 534h1v2h-1zM57 524h1v4h-1zM57 530h1v2h-1zM57 534h1v2h-1zM59 524h1v4h-1zM59 530h1v4h-1zM59 536h1v2h-1zM62 524h1v4h-1zM62 530h1v8h-1zM64 536h1v2h-1zM66 524h1v4h-1zM66 530h1v6h-1zM68 524h1v4h-1zM68 530h1v6h-1zM70 524h1v10h-1zM70 536h1v2h-1zM73 524h1v14h-1zM75 524h1v14h-1zM77 524h1v14h-1zM79 524h1v14h-1zM81 524h1v14h-1zM84 524h1v2h-1zM84 536h1v2h-1zM86 526h1v10h-1zM88 526h1v10h-1zM90 526h1v10h-1zM92 524h1v2h-1zM92 528h1v6h-1zM92 536h1v2h-1zM95 524h1v6h-1zM95 536h1v2h-1zM97 524h1v4h-1zM97 530h1v6h-1zM99 524h1v4h-1zM99 530h1v6h-1zM101 524h1v4h-1zM101 530h1v6h-1zM103 524h1v6h-1zM103 536h1v2h-1zM106 524h1v4h-1zM108 524h1v4h-1zM108 530h1v8h-1zM110 524h1v6h-1zM112 524h1v4h-1zM112 530h1v8h-1zM114 524h1v6h-1zM117 524h1v4h-1zM119 524h1v4h-1zM119 530h1v2h-1zM119 534h1v4h-1zM121 524h1v4h-1zM121 530h1v2h-1zM121 534h1v4h-1zM123 524h1v4h-1zM123 530h1v2h-1zM123 534h1v4h-1zM125 524h1v6h-1zM125 532h1v6h-1zM128 524h1v14h-1zM130 526h1v10h-1zM134 524h1v12h-1zM136 524h1v14h-1zM139 524h1v6h-1zM139 536h1v2h-1zM141 524h1v4h-1zM141 530h1v2h-1zM141 534h1v2h-1zM143 524h1v4h-1zM143 530h1v2h-1zM143 534h1v2h-1zM145 524h1v4h-1zM145 530h1v2h-1zM145 534h1v2h-1zM147 524h1v6h-1zM147 534h1v2h-1zM150 524h1v4h-1zM150 530h1v8h-1zM152 536h1v2h-1zM154 524h1v4h-1zM154 530h1v6h-1zM156 524h1v4h-1zM156 530h1v6h-1zM158 524h1v10h-1zM158 536h1v2h-1zM161 524h1v6h-1zM161 536h1v2h-1zM163 524h1v4h-1zM163 530h1v2h-1zM163 534h1v2h-1zM165 524h1v4h-1zM165 530h1v2h-1zM165 534h1v2h-1zM167 524h1v4h-1zM167 530h1v2h-1zM167 534h1v2h-1zM169 524h1v6h-1zM169 534h1v2h-1zM172 524h1v14h-1zM174 524h1v14h-1zM176 524h1v14h-1zM178 524h1v14h-1zM180 524h1v14h-1zM183 524h1v14h-1zM185 524h1v14h-1zM187 524h1v2h-1zM187 528h1v2h-1zM189 524h1v14h-1zM191 524h1v14h-1zM194 524h1v4h-1zM196 524h1v6h-1zM196 532h1v6h-1zM198 524h1v4h-1zM198 530h1v8h-1zM200 524h1v4h-1zM200 530h1v8h-1zM202 524h1v6h-1zM205 524h1v14h-1zM207 524h1v14h-1zM209 524h1v14h-1zM211 524h1v14h-1zM213 524h1v14h-1zM216 524h1v14h-1zM218 524h1v2h-1zM218 528h1v8h-1zM222 524h1v12h-1zM224 524h1v14h-1zM227 524h1v2h-1zM227 530h1v2h-1zM227 536h1v2h-1zM229 526h1v4h-1zM229 532h1v4h-1zM231 526h1v4h-1zM231 532h1v4h-1zM233 526h1v4h-1zM233 532h1v4h-1zM235 524h1v2h-1zM235 530h1v2h-1zM235 536h1v2h-1zM238 524h1v14h-1zM240 524h1v2h-1zM240 530h1v2h-1zM240 536h1v2h-1zM242 524h1v2h-1zM242 530h1v2h-1zM242 536h1v2h-1zM244 524h1v14h-1zM246 524h1v14h-1zM249 524h1v2h-1zM249 536h1v2h-1zM251 526h1v6h-1zM251 534h1v2h-1zM253 526h1v4h-1zM253 532h1v4h-1zM255 526h1v2h-1zM255 530h1v6h-1zM257 524h1v2h-1zM257 536h1v2h-1zM260 524h1v2h-1zM260 536h1v2h-1zM262 526h1v4h-1zM262 532h1v4h-1zM264 526h1v4h-1zM264 532h1v4h-1zM266 526h1v4h-1zM266 532h1v4h-1zM268 526h1v6h-1zM268 536h1v2h-1zM271 524h1v14h-1zM273 524h1v14h-1zM275 524h1v14h-1zM277 524h1v14h-1zM279 524h1v14h-1zM282 524h1v14h-1zM284 524h1v14h-1zM286 524h1v14h-1zM288 524h1v14h-1zM290 524h1v14h-1zM293 524h1v14h-1zM295 524h1v14h-1zM297 524h1v14h-1zM299 524h1v14h-1zM301 524h1v14h-1zM304 524h1v14h-1zM306 524h1v14h-1zM308 524h1v14h-1zM310 524h1v14h-1zM312 524h1v14h-1zM315 524h1v14h-1zM317 524h1v14h-1zM319 524h1v14h-1zM321 524h1v14h-1zM323 524h1v14h-1zM326 524h1v14h-1zM328 524h1v14h-1zM330 524h1v14h-1zM332 524h1v14h-1zM334 524h1v14h-1zM337 524h1v14h-1zM339 524h1v14h-1zM341 524h1v14h-1zM343 524h1v14h-1zM345 524h1v14h-1zM348 524h1v14h-1zM350 524h1v14h-1zM352 524h1v14h-1zM354 524h1v14h-1zM356 524h1v14h-1zM359 524h1v14h-1zM361 524h1v14h-1zM363 524h1v14h-1zM365 524h1v14h-1zM367 524h1v14h-1zM370 524h1v14h-1zM372 524h1v14h-1zM374 524h1v14h-1zM376 524h1v14h-1zM378 524h1v14h-1zM381 524h1v14h-1zM383 524h1v14h-1zM385 524h1v14h-1zM387 524h1v14h-1zM389 524h1v14h-1zM392 524h1v14h-1zM394 524h1v14h-1zM396 524h1v14h-1zM398 524h1v14h-1zM400 524h1v14h-1zM403 524h1v14h-1zM405 524h1v14h-1zM407 524h1v14h-1zM409 524h1v14h-1zM411 524h1v14h-1zM414 524h1v14h-1zM416 524h1v14h-1zM418 524h1v14h-1zM420 524h1v14h-1zM422 524h1v14h-1zM425 524h1v14h-1zM427 524h1v14h-1zM429 524h1v14h-1zM431 524h1v14h-1zM433 524h1v14h-1zM436 524h1v14h-1zM438 524h1v14h-1zM440 524h1v14h-1zM442 524h1v14h-1zM444 524h1v14h-1zM447 524h1v14h-1zM449 524h1v14h-1zM451 524h1v14h-1zM453 524h1v14h-1zM455 524h1v14h-1zM458 524h1v14h-1zM460 524h1v14h-1zM462 524h1v14h-1zM464 524h1v14h-1zM466 524h1v14h-1z" fill="#004a5c"/><path d="M29 524h1v2h-1zM31 524h1v2h-1zM33 524h1v14h-1zM35 524h1v2h-1zM37 524h1v2h-1zM40 530h1v6h-1zM42 528h1v2h-1zM42 532h1v2h-1zM42 536h1v2h-1zM44 528h1v2h-1zM44 532h1v2h-1zM44 536h1v2h-1zM46 528h1v2h-1zM46 532h1v2h-1zM46 536h1v2h-1zM48 530h1v4h-1zM48 536h1v2h-1zM51 530h1v2h-1zM51 536h1v2h-1zM53 528h1v2h-1zM53 532h1v2h-1zM53 536h1v2h-1zM55 528h1v2h-1zM55 532h1v2h-1zM55 536h1v2h-1zM57 528h1v2h-1zM57 532h1v2h-1zM57 536h1v2h-1zM59 528h1v2h-1zM59 534h1v2h-1zM62 528h1v2h-1zM64 524h1v12h-1zM66 528h1v2h-1zM66 536h1v2h-1zM68 528h1v2h-1zM68 536h1v2h-1zM70 534h1v2h-1zM84 526h1v10h-1zM86 524h1v2h-1zM86 536h1v2h-1zM88 524h1v2h-1zM88 536h1v2h-1zM90 524h1v2h-1zM90 536h1v2h-1zM92 526h1v2h-1zM92 534h1v2h-1zM95 530h1v6h-1zM97 528h1v2h-1zM97 536h1v2h-1zM99 528h1v2h-1zM99 536h1v2h-1zM101 528h1v2h-1zM101 536h1v2h-1zM103 530h1v6h-1zM106 528h1v10h-1zM108 528h1v2h-1zM110 530h1v8h-1zM112 528h1v2h-1zM114 530h1v8h-1zM117 528h1v10h-1zM119 528h1v2h-1zM119 532h1v2h-1zM121 528h1v2h-1zM121 532h1v2h-1zM123 528h1v2h-1zM123 532h1v2h-1zM125 530h1v2h-1zM130 524h1v2h-1zM130 536h1v2h-1zM132 524h1v14h-1zM134 536h1v2h-1zM139 530h1v6h-1zM141 528h1v2h-1zM141 532h1v2h-1zM141 536h1v2h-1zM143 528h1v2h-1zM143 532h1v2h-1zM143 536h1v2h-1zM145 528h1v2h-1zM145 532h1v2h-1zM145 536h1v2h-1zM147 530h1v4h-1zM147 536h1v2h-1zM150 528h1v2h-1zM152 524h1v12h-1zM154 528h1v2h-1zM154 536h1v2h-1zM156 528h1v2h-1zM156 536h1v2h-1zM158 534h1v2h-1zM161 530h1v6h-1zM163 528h1v2h-1zM163 532h1v2h-1zM163 536h1v2h-1zM165 528h1v2h-1zM165 532h1v2h-1zM165 536h1v2h-1zM167 528h1v2h-1zM167 532h1v2h-1zM167 536h1v2h-1zM169 530h1v4h-1zM169 536h1v2h-1zM187 526h1v2h-1zM187 530h1v8h-1zM194 528h1v10h-1zM196 530h1v2h-1zM198 528h1v2h-1zM200 528h1v2h-1zM202 530h1v8h-1zM218 526h1v2h-1zM218 536h1v2h-1zM220 524h1v14h-1zM222 536h1v2h-1zM227 526h1v4h-1zM227 532h1v4h-1zM229 524h1v2h-1zM229 530h1v2h-1zM229 536h1v2h-1zM231 524h1v2h-1zM231 530h1v2h-1zM231 536h1v2h-1zM233 524h1v2h-1zM233 530h1v2h-1zM233 536h1v2h-1zM235 526h1v4h-1zM235 532h1v4h-1zM240 526h1v4h-1zM240 532h1v4h-1zM242 526h1v4h-1zM242 532h1v4h-1zM249 526h1v10h-1zM251 524h1v2h-1zM251 532h1v2h-1zM251 536h1v2h-1zM253 524h1v2h-1zM253 530h1v2h-1zM253 536h1v2h-1zM255 524h1v2h-1zM255 528h1v2h-1zM255 536h1v2h-1zM257 526h1v10h-1zM260 526h1v10h-1zM262 524h1v2h-1zM262 530h1v2h-1zM262 536h1v2h-1zM264 524h1v2h-1zM264 530h1v2h-1zM264 536h1v2h-1zM266 524h1v2h-1zM266 530h1v2h-1zM266 536h1v2h-1zM268 524h1v2h-1zM268 532h1v4h-1z" fill="#00dcff"/></svg>
<div style="position:absolute;left:516px;top:42px;width:217px;height:150px;border:1px solid #fff;"></div>
<div style="position:absolute;left:515px;top:41px;width:217px;height:150px;border:1px solid #808080;"></div>
<div style="position:absolute;left:521.4px;top:40px;width:89.8px;height:4px;background:#d4d0c8;"></div>
<div class="t" style="left:522.40px;top:35.00px;font-weight:normal;font-size:11px;letter-spacing:-0.138px;color:#000;">PI Errors &amp; Speed</div>
<div class="t" style="left:520.80px;top:62.00px;font-weight:normal;font-size:11px;letter-spacing:-0.514px;color:#000;">MID Code</div>
<div style="position:absolute;left:587px;top:57px;width:138px;height:18px;border-style:solid;border-width:1px;border-color:#808080 #fff #fff #808080;"><div style="position:absolute;left:0;top:0;width:136px;height:16px;border-style:solid;border-width:1px;border-color:#404040 #d4d0c8 #d4d0c8 #404040;background:#d4d0c8"></div></div>
<div class="t" style="left:624.40px;top:62.00px;font-weight:normal;font-size:11px;letter-spacing:-0.475px;color:#000;">MKM01RD30</div>
<div class="t" style="left:522.30px;top:85.00px;font-weight:normal;font-size:11px;letter-spacing:-0.213px;color:#000;">Type/Book</div>
<div style="position:absolute;left:587px;top:81px;width:69px;height:18px;border-style:solid;border-width:1px;border-color:#808080 #fff #fff #808080;"><div style="position:absolute;left:0;top:0;width:67px;height:16px;border-style:solid;border-width:1px;border-color:#404040 #d4d0c8 #d4d0c8 #404040;background:#d4d0c8"></div></div>
<div style="position:absolute;left:658px;top:81px;width:68px;height:18px;border-style:solid;border-width:1px;border-color:#808080 #fff #fff #808080;"><div style="position:absolute;left:0;top:0;width:66px;height:16px;border-style:solid;border-width:1px;border-color:#404040 #d4d0c8 #d4d0c8 #404040;background:#d4d0c8"></div></div>
<div class="t" style="left:597.90px;top:85.00px;font-weight:normal;font-size:11px;letter-spacing:-0.283px;color:#000;">DVD-RDL</div>
<div class="t" style="left:675.60px;top:85.00px;font-weight:normal;font-size:11px;letter-spacing:0.075px;color:#000;">DVD-R</div>
<svg style="position:absolute;left:530px;top:109px" width="17" height="17" viewBox="0 0 17 17"><circle cx="7.5" cy="7.5" r="7" fill="#00ff00" stroke="#000" stroke-width="1"/><path d="M4.6 7.4 L7 5" stroke="#fff" stroke-width="1.3" stroke-linecap="round"/></svg>
<div class="t" style="left:549.00px;top:111.00px;font-weight:normal;font-size:11px;letter-spacing:-0.229px;color:#000;">Show PIE</div>
<svg style="position:absolute;left:530px;top:128px" width="17" height="17" viewBox="0 0 17 17"><circle cx="7.5" cy="7.5" r="7" fill="#ff0000" stroke="#000" stroke-width="1"/><path d="M4.6 7.4 L7 5" stroke="#fff" stroke-width="1.3" stroke-linecap="round"/></svg>
<div class="t" style="left:547.60px;top:130.00px;font-weight:normal;font-size:11px;letter-spacing:0.200px;color:#000;">Show Speed</div>
<svg style="position:absolute;left:616px;top:111px" width="12" height="12" viewBox="0 0 12 12" shape-rendering="crispEdges"><path d="M4 0h4v1H4zM2 1h2v1H2zM8 1h2v1H8zM1 2h1v2H1zM0 4h1v4H0zM1 8h1v2H1z" fill="#808080"/><path d="M4 1h4v1H4zM2 2h2v1H2zM8 2h2v1H8zM2 3h1v1H2zM1 4h1v4H1zM2 8h1v1H2z" fill="#404040"/><path d="M10 2h1v2h-1zM11 4h1v4h-1zM10 8h1v2h-1zM8 10h2v1H8zM2 10h2v1H2zM4 11h4v1H4z" fill="#fff"/><path d="M9 3h1v1H9zM10 4h1v4h-1zM9 8h1v1H9zM8 9h1v1H8zM3 9h1v1H3zM4 10h4v1H4z" fill="#d4d0c8"/><path d="M4 2h4v1H4zM3 3h6v1H3zM2 4h8v4H2zM3 8h6v1H3zM4 9h4v1H4z" fill="#fff"/></svg>
<div class="t" style="left:631.50px;top:111.00px;font-weight:normal;font-size:11px;letter-spacing:0.267px;color:#000;">Line</div>
<svg style="position:absolute;left:671px;top:111px" width="12" height="12" viewBox="0 0 12 12" shape-rendering="crispEdges"><path d="M4 0h4v1H4zM2 1h2v1H2zM8 1h2v1H8zM1 2h1v2H1zM0 4h1v4H0zM1 8h1v2H1z" fill="#808080"/><path d="M4 1h4v1H4zM2 2h2v1H2zM8 2h2v1H8zM2 3h1v1H2zM1 4h1v4H1zM2 8h1v1H2z" fill="#404040"/><path d="M10 2h1v2h-1zM11 4h1v4h-1zM10 8h1v2h-1zM8 10h2v1H8zM2 10h2v1H2zM4 11h4v1H4z" fill="#fff"/><path d="M9 3h1v1H9zM10 4h1v4h-1zM9 8h1v1H9zM8 9h1v1H8zM3 9h1v1H3zM4 10h4v1H4z" fill="#d4d0c8"/><path d="M4 2h4v1H4zM3 3h6v1H3zM2 4h8v4H2zM3 8h6v1H3zM4 9h4v1H4z" fill="#fff"/><rect x="4" y="5" width="4" height="2" fill="#000"/><rect x="5" y="4" width="2" height="4" fill="#000"/></svg>
<div class="t" style="left:686.40px;top:111.00px;font-weight:normal;font-size:11px;letter-spacing:0.075px;color:#000;">Block</div>
<div class="t" style="left:525.70px;top:150.00px;font-weight:normal;font-size:11px;letter-spacing:-0.073px;color:#000;">PIE Scale (Left)</div>
<div class="t" style="left:527.10px;top:173.00px;font-weight:normal;font-size:11px;letter-spacing:0.025px;color:#000;">Speed</div>
<div style="position:absolute;left:628px;top:145px;width:78px;height:20px;border-style:solid;border-width:1px;border-color:#808080 #fff #fff #808080;"><div style="position:absolute;left:0;top:0;width:76px;height:18px;border-style:solid;border-width:1px;border-color:#404040 #d4d0c8 #d4d0c8 #404040;background:#fff"></div></div>
<div style="position:absolute;left:690px;top:147px;width:14px;height:16px;border-style:solid;border-width:1px;border-color:#d4d0c8 #404040 #404040 #d4d0c8;background:#d4d0c8"><div style="position:absolute;left:0;top:0;width:12px;height:14px;border-style:solid;border-width:1px;border-color:#fff #808080 #808080 #fff;"><svg style="position:absolute;left:2px;top:5px" width="8" height="5" shape-rendering="crispEdges"><path d="M0 0h7v1H0zM1 1h5v1H1zM2 2h3v1H2zM3 3h1v1H3z" fill="#000"/></svg></div></div>
<div class="t" style="left:631.30px;top:151.00px;font-weight:normal;font-size:11px;letter-spacing:0.075px;color:#000;">0-640</div>
<div style="position:absolute;left:628px;top:169px;width:78px;height:20px;border-style:solid;border-width:1px;border-color:#808080 #fff #fff #808080;"><div style="position:absolute;left:0;top:0;width:76px;height:18px;border-style:solid;border-width:1px;border-color:#404040 #d4d0c8 #d4d0c8 #404040;background:#fff"></div></div>
<div style="position:absolute;left:690px;top:171px;width:14px;height:16px;border-style:solid;border-width:1px;border-color:#d4d0c8 #404040 #404040 #d4d0c8;background:#d4d0c8"><div style="position:absolute;left:0;top:0;width:12px;height:14px;border-style:solid;border-width:1px;border-color:#fff #808080 #808080 #fff;"><svg style="position:absolute;left:2px;top:5px" width="8" height="5" shape-rendering="crispEdges"><path d="M0 0h7v1H0zM1 1h5v1H1zM2 2h3v1H2zM3 3h1v1H3z" fill="#000"/></svg></div></div>
<div class="t" style="left:640.60px;top:174.00px;font-weight:normal;font-size:11px;letter-spacing:0.220px;color:#000;">8x CAV</div>
<div style="position:absolute;left:516px;top:202px;width:217px;height:150px;border:1px solid #fff;"></div>
<div style="position:absolute;left:515px;top:201px;width:217px;height:150px;border:1px solid #808080;"></div>
<div style="position:absolute;left:521.8px;top:200px;width:89.1px;height:4px;background:#d4d0c8;"></div>
<div class="t" style="left:522.80px;top:196.00px;font-weight:normal;font-size:11px;letter-spacing:-0.258px;color:#000;">PI Failures &amp; Jitter</div>
<svg style="position:absolute;left:530px;top:217px" width="17" height="17" viewBox="0 0 17 17"><circle cx="7.5" cy="7.5" r="7" fill="#ff00ff" stroke="#000" stroke-width="1"/><path d="M4.6 7.4 L7 5" stroke="#fff" stroke-width="1.3" stroke-linecap="round"/></svg>
<div class="t" style="left:546.70px;top:218.00px;font-weight:normal;font-size:11px;letter-spacing:0.140px;color:#000;">Show Jitter</div>
<svg style="position:absolute;left:530px;top:237px" width="17" height="17" viewBox="0 0 17 17"><circle cx="7.5" cy="7.5" r="7" fill="#ffff00" stroke="#000" stroke-width="1"/><path d="M4.6 7.4 L7 5" stroke="#fff" stroke-width="1.3" stroke-linecap="round"/></svg>
<div class="t" style="left:549.00px;top:238.00px;font-weight:normal;font-size:11px;letter-spacing:-0.214px;color:#000;">Show PIF</div>
<svg style="position:absolute;left:616px;top:219px" width="12" height="12" viewBox="0 0 12 12" shape-rendering="crispEdges"><path d="M4 0h4v1H4zM2 1h2v1H2zM8 1h2v1H8zM1 2h1v2H1zM0 4h1v4H0zM1 8h1v2H1z" fill="#808080"/><path d="M4 1h4v1H4zM2 2h2v1H2zM8 2h2v1H8zM2 3h1v1H2zM1 4h1v4H1zM2 8h1v1H2z" fill="#404040"/><path d="M10 2h1v2h-1zM11 4h1v4h-1zM10 8h1v2h-1zM8 10h2v1H8zM2 10h2v1H2zM4 11h4v1H4z" fill="#fff"/><path d="M9 3h1v1H9zM10 4h1v4h-1zM9 8h1v1H9zM8 9h1v1H8zM3 9h1v1H3zM4 10h4v1H4z" fill="#d4d0c8"/><path d="M4 2h4v1H4zM3 3h6v1H3zM2 4h8v4H2zM3 8h6v1H3zM4 9h4v1H4z" fill="#fff"/><rect x="4" y="5" width="4" height="2" fill="#000"/><rect x="5" y="4" width="2" height="4" fill="#000"/></svg>
<div class="t" style="left:631.50px;top:218.00px;font-weight:normal;font-size:11px;letter-spacing:-0.083px;color:#000;">Instant</div>
<svg style="position:absolute;left:671px;top:219px" width="12" height="12" viewBox="0 0 12 12" shape-rendering="crispEdges"><path d="M4 0h4v1H4zM2 1h2v1H2zM8 1h2v1H8zM1 2h1v2H1zM0 4h1v4H0zM1 8h1v2H1z" fill="#808080"/><path d="M4 1h4v1H4zM2 2h2v1H2zM8 2h2v1H8zM2 3h1v1H2zM1 4h1v4H1zM2 8h1v1H2z" fill="#404040"/><path d="M10 2h1v2h-1zM11 4h1v4h-1zM10 8h1v2h-1zM8 10h2v1H8zM2 10h2v1H2zM4 11h4v1H4z" fill="#fff"/><path d="M9 3h1v1H9zM10 4h1v4h-1zM9 8h1v1H9zM8 9h1v1H8zM3 9h1v1H3zM4 10h4v1H4z" fill="#d4d0c8"/><path d="M4 2h4v1H4zM3 3h6v1H3zM2 4h8v4H2zM3 8h6v1H3zM4 9h4v1H4z" fill="#fff"/></svg>
<div class="t" style="left:688.00px;top:218.00px;font-weight:normal;font-size:11px;letter-spacing:0.150px;color:#000;">Average</div>
<svg style="position:absolute;left:616px;top:237px" width="12" height="12" viewBox="0 0 12 12" shape-rendering="crispEdges"><path d="M4 0h4v1H4zM2 1h2v1H2zM8 1h2v1H8zM1 2h1v2H1zM0 4h1v4H0zM1 8h1v2H1z" fill="#808080"/><path d="M4 1h4v1H4zM2 2h2v1H2zM8 2h2v1H8zM2 3h1v1H2zM1 4h1v4H1zM2 8h1v1H2z" fill="#404040"/><path d="M10 2h1v2h-1zM11 4h1v4h-1zM10 8h1v2h-1zM8 10h2v1H8zM2 10h2v1H2zM4 11h4v1H4z" fill="#fff"/><path d="M9 3h1v1H9zM10 4h1v4h-1zM9 8h1v1H9zM8 9h1v1H8zM3 9h1v1H3zM4 10h4v1H4z" fill="#d4d0c8"/><path d="M4 2h4v1H4zM3 3h6v1H3zM2 4h8v4H2zM3 8h6v1H3zM4 9h4v1H4z" fill="#fff"/></svg>
<div class="t" style="left:631.50px;top:237.00px;font-weight:normal;font-size:11px;letter-spacing:0.267px;color:#000;">Line</div>
<svg style="position:absolute;left:671px;top:237px" width="12" height="12" viewBox="0 0 12 12" shape-rendering="crispEdges"><path d="M4 0h4v1H4zM2 1h2v1H2zM8 1h2v1H8zM1 2h1v2H1zM0 4h1v4H0zM1 8h1v2H1z" fill="#808080"/><path d="M4 1h4v1H4zM2 2h2v1H2zM8 2h2v1H8zM2 3h1v1H2zM1 4h1v4H1zM2 8h1v1H2z" fill="#404040"/><path d="M10 2h1v2h-1zM11 4h1v4h-1zM10 8h1v2h-1zM8 10h2v1H8zM2 10h2v1H2zM4 11h4v1H4z" fill="#fff"/><path d="M9 3h1v1H9zM10 4h1v4h-1zM9 8h1v1H9zM8 9h1v1H8zM3 9h1v1H3zM4 10h4v1H4z" fill="#d4d0c8"/><path d="M4 2h4v1H4zM3 3h6v1H3zM2 4h8v4H2zM3 8h6v1H3zM4 9h4v1H4z" fill="#fff"/><rect x="4" y="5" width="4" height="2" fill="#000"/><rect x="5" y="4" width="2" height="4" fill="#000"/></svg>
<div class="t" style="left:686.40px;top:237.00px;font-weight:normal;font-size:11px;letter-spacing:0.075px;color:#000;">Block</div>
<div class="t" style="left:526.30px;top:265.00px;font-weight:normal;font-size:11px;letter-spacing:-0.033px;color:#000;">PIF Scale (Left)</div>
<div class="t" style="left:527.30px;top:289.00px;font-weight:normal;font-size:11px;letter-spacing:-0.111px;color:#000;">Jitter Scale (Right)</div>
<div style="position:absolute;left:628px;top:260px;width:78px;height:20px;border-style:solid;border-width:1px;border-color:#808080 #fff #fff #808080;"><div style="position:absolute;left:0;top:0;width:76px;height:18px;border-style:solid;border-width:1px;border-color:#404040 #d4d0c8 #d4d0c8 #404040;background:#fff"></div></div>
<div style="position:absolute;left:690px;top:262px;width:14px;height:16px;border-style:solid;border-width:1px;border-color:#d4d0c8 #404040 #404040 #d4d0c8;background:#d4d0c8"><div style="position:absolute;left:0;top:0;width:12px;height:14px;border-style:solid;border-width:1px;border-color:#fff #808080 #808080 #fff;"><svg style="position:absolute;left:2px;top:5px" width="8" height="5" shape-rendering="crispEdges"><path d="M0 0h7v1H0zM1 1h5v1H1zM2 2h3v1H2zM3 3h1v1H3z" fill="#000"/></svg></div></div>
<div class="t" style="left:631.30px;top:265.00px;font-weight:normal;font-size:11px;letter-spacing:0.075px;color:#000;">0-320</div>
<div style="position:absolute;left:628px;top:284px;width:78px;height:20px;border-style:solid;border-width:1px;border-color:#808080 #fff #fff #808080;"><div style="position:absolute;left:0;top:0;width:76px;height:18px;border-style:solid;border-width:1px;border-color:#404040 #d4d0c8 #d4d0c8 #404040;background:#fff"></div></div>
<div style="position:absolute;left:690px;top:286px;width:14px;height:16px;border-style:solid;border-width:1px;border-color:#d4d0c8 #404040 #404040 #d4d0c8;background:#d4d0c8"><div style="position:absolute;left:0;top:0;width:12px;height:14px;border-style:solid;border-width:1px;border-color:#fff #808080 #808080 #fff;"><svg style="position:absolute;left:2px;top:5px" width="8" height="5" shape-rendering="crispEdges"><path d="M0 0h7v1H0zM1 1h5v1H1zM2 2h3v1H2zM3 3h1v1H3z" fill="#000"/></svg></div></div>
<div class="t" style="left:631.30px;top:289.00px;font-weight:normal;font-size:11px;letter-spacing:0.200px;color:#000;">0-20%</div>
<div class="t" style="left:533.10px;top:313.00px;font-weight:normal;font-size:11px;letter-spacing:-0.127px;color:#000;">Jitter Inst.</div>
<div class="t" style="left:598.30px;top:313.00px;font-weight:normal;font-size:11px;letter-spacing:-0.440px;color:#000;">Jitter Peak</div>
<div class="t" style="left:663.10px;top:313.00px;font-weight:normal;font-size:11px;letter-spacing:0.033px;color:#000;">Jitter Avg</div>
<div class="t" style="left:537.40px;top:328.00px;font-weight:normal;font-size:11px;letter-spacing:0.150px;color:#000;">10.7%</div>
<div class="t" style="left:602.20px;top:328.00px;font-weight:normal;font-size:11px;letter-spacing:0.150px;color:#000;">16.6%</div>
<div class="t" style="left:667.40px;top:328.00px;font-weight:normal;font-size:11px;letter-spacing:0.150px;color:#000;">10.3%</div>
<div style="position:absolute;left:516px;top:362px;width:217px;height:30px;border:1px solid #fff;"></div>
<div style="position:absolute;left:515px;top:361px;width:217px;height:30px;border:1px solid #808080;"></div>
<div style="position:absolute;left:521.8px;top:360px;width:150.5px;height:4px;background:#d4d0c8;"></div>
<div class="t" style="left:522.80px;top:355.00px;font-weight:normal;font-size:11px;letter-spacing:-0.056px;color:#000;">Progressive Colored Scanning</div>
<svg style="position:absolute;left:561px;top:373px" width="17" height="17" viewBox="0 0 17 17"><circle cx="7.5" cy="7.5" r="7" fill="#0050ff" stroke="#000" stroke-width="1"/><path d="M4.6 7.4 L7 5" stroke="#fff" stroke-width="1.3" stroke-linecap="round"/></svg>
<div class="t" style="left:578.30px;top:375.00px;font-weight:normal;font-size:11px;letter-spacing:-0.100px;color:#000;">Upper</div>
<svg style="position:absolute;left:661px;top:373px" width="17" height="17" viewBox="0 0 17 17"><circle cx="7.5" cy="7.5" r="7" fill="#0050ff" stroke="#000" stroke-width="1"/><path d="M4.6 7.4 L7 5" stroke="#fff" stroke-width="1.3" stroke-linecap="round"/></svg>
<div class="t" style="left:677.60px;top:375.00px;font-weight:normal;font-size:11px;letter-spacing:0.575px;color:#000;">Lower</div>
<div style="position:absolute;left:516px;top:404px;width:217px;height:45px;border:1px solid #fff;"></div>
<div style="position:absolute;left:515px;top:403px;width:217px;height:45px;border:1px solid #808080;"></div>
<div style="position:absolute;left:521.8px;top:402px;width:143.7px;height:4px;background:#d4d0c8;"></div>
<div class="t" style="left:522.80px;top:397.00px;font-weight:normal;font-size:11px;letter-spacing:-0.154px;color:#000;">Snapshot,&nbsp; Clipboard&nbsp; &amp; Eject</div>
<svg style="position:absolute;left:0;top:0" width="753" height="566"><defs><pattern id="chk" x="0" y="0" width="2" height="2" patternUnits="userSpaceOnUse"><rect width="1" height="1" fill="#8c8c8c"/><rect x="1" y="1" width="1" height="1" fill="#8c8c8c"/></pattern><linearGradient id="brd" x1="0" y1="0" x2="0" y2="1"><stop offset="0" stop-color="#d8a470"/><stop offset="0.5" stop-color="#d09058"/><stop offset="1" stop-color="#c08048"/></linearGradient></defs><g shape-rendering="crispEdges"><rect x="544" y="422" width="24" height="15" fill="#505050"/><rect x="543" y="421" width="24" height="15" fill="#ececec"/><rect x="545" y="418" width="3" height="3" fill="#e4e4e4"/><rect x="547" y="419" width="1" height="2" fill="#303030"/><rect x="543" y="420" width="24" height="1" fill="#f4f4f4"/><rect x="544" y="423" width="5" height="12" fill="url(#chk)"/><rect x="562" y="423" width="5" height="12" fill="url(#chk)"/></g><circle cx="555.6" cy="427.8" r="5" fill="#6c6c6c"/><circle cx="555.6" cy="427.8" r="3.6" fill="#9a9a9a"/><circle cx="555.3" cy="427.3" r="3" fill="#1c1c1c"/><circle cx="554.6" cy="426.8" r="0.9" fill="#fff"/><rect x="618.5" y="417.5" width="17" height="21" rx="2" fill="url(#brd)" stroke="#8a5024" stroke-width="1"/><path d="M620.5 421.5 v-1.5 l2 -1.5 h2 v-2 l1 -1 h3 l1 1 v2 h2 l2 1.5 v1.5 z" fill="#e6e6e6" stroke="#6a6a6a" stroke-width="1"/><rect x="626" y="417.5" width="2" height="1" fill="#404040"/><path d="M628.5 421.5 h8 l4.5 4.5 v10.5 h-12.5 z" fill="#fbfbfb" stroke="#6a6a6a" stroke-width="1"/><path d="M636.5 420.5 l5 5 h-5 z" fill="#3a96e8"/><g shape-rendering="crispEdges"><rect x="630" y="423" width="6" height="1" fill="#c0c0c0"/><rect x="630" y="426" width="9" height="1" fill="#b0b0b0"/><rect x="630" y="429" width="9" height="1" fill="#b0b0b0"/><rect x="630" y="432" width="9" height="1" fill="#b0b0b0"/></g><path d="M689.5 420.5 h14 l4.5 4.5 v6 h-23 v-6 z" fill="#f0f0f0" stroke="#7a7a7a" stroke-width="1"/><path d="M690 421 h13 l4 4 h-21 z" fill="#d0d0d0"/><g shape-rendering="crispEdges"><rect x="685" y="431" width="24" height="1" fill="#505050"/><rect x="692" y="427" width="14" height="1" fill="#7c7c7c"/><rect x="692" y="428" width="14" height="1" fill="#fff"/><rect x="688" y="427" width="2" height="2" fill="#20c020"/><rect x="691" y="427" width="1" height="1" fill="#707070"/></g></svg>
<div class="t" style="left:683.90px;top:431.00px;font-weight:bold;font-size:11px;letter-spacing:0.100px;color:#000;text-shadow:1px 1px 0 #fff">Eject</div>
<div style="position:absolute;left:516px;top:461px;width:217px;height:38px;border:1px solid #fff;"></div>
<div style="position:absolute;left:515px;top:460px;width:217px;height:38px;border:1px solid #808080;"></div>
<div style="position:absolute;left:521.8px;top:459px;width:38.6px;height:4px;background:#d4d0c8;"></div>
<div class="t" style="left:523.80px;top:454.00px;font-weight:normal;font-size:11px;letter-spacing:-0.233px;color:#000;">Control</div>
<div class="t" style="left:536.90px;top:475.00px;font-weight:normal;font-size:11px;letter-spacing:-0.125px;color:#000;"><u>S</u>tart</div>
<div class="t" style="left:586.50px;top:475.00px;font-weight:normal;font-size:11px;letter-spacing:0.200px;color:#000;">St<u>o</u>p</div>
<div class="t" style="left:636.20px;top:475.00px;font-weight:normal;font-size:11px;letter-spacing:0.100px;color:#000;"><u>L</u>oad</div>
<div class="t" style="left:685.30px;top:475.00px;font-weight:normal;font-size:11px;letter-spacing:-0.033px;color:#000;"><u>S</u>ave</div>
<div style="position:absolute;left:515px;top:504px;width:220px;height:32px;background:#fff;border-top:1px solid #808080;border-left:1px solid #808080;box-sizing:border-box"></div>
<div class="t" style="left:593.50px;top:513.00px;font-weight:normal;font-size:11px;letter-spacing:-1.000px;color:#0a246a;">0</div>
<div class="t" style="left:602.50px;top:513.00px;font-weight:normal;font-size:11px;letter-spacing:-1.500px;color:#0a246a;transform:scaleX(0.8);transform-origin:0 0">%</div>
<div class="t" style="left:613.70px;top:513.00px;font-weight:normal;font-size:11px;letter-spacing:-0.486px;color:#0a246a;">Complete</div>
</body></html>
